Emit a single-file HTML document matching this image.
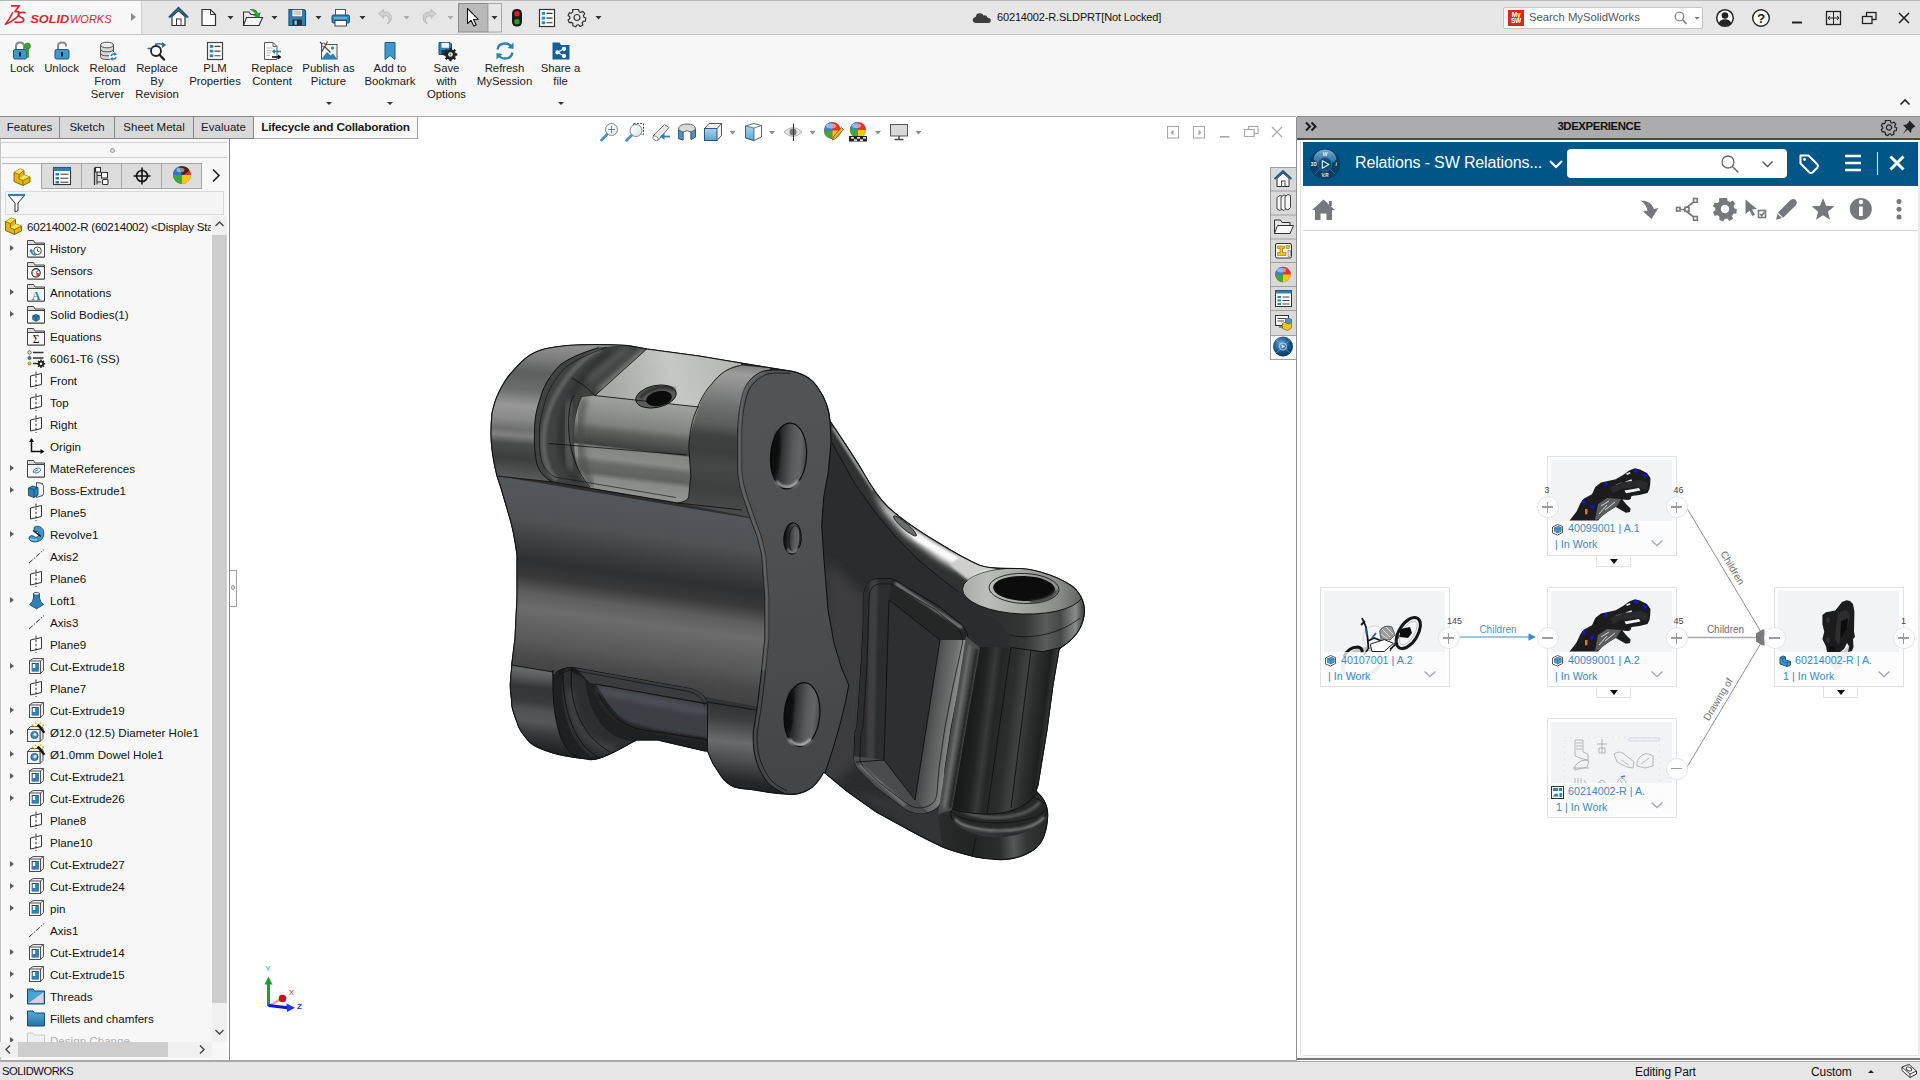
<!DOCTYPE html>
<html><head><meta charset="utf-8"><title>SOLIDWORKS</title>
<style>
*{box-sizing:border-box;margin:0;padding:0}
html,body{width:1920px;height:1080px;overflow:hidden;background:#fff;font-family:"Liberation Sans",sans-serif;font-size:12px;color:#111}
.abs{position:absolute}
#titlebar{position:absolute;left:0;top:0;width:1920px;height:35px;background:#e6e6e6;border-top:1px solid #b9b9b9;border-bottom:1px solid #c6c6c6}
#logo{position:absolute;left:0;top:0;width:142px;height:33px;background:#f7f7f7;border-right:1px solid #d0d0d0}
#ribbon{position:absolute;left:0;top:35px;width:1920px;height:82px;background:#f7f7f7}
.rb{position:absolute;top:27px;text-align:center;font-size:11.35px;line-height:13px;color:#1a1a1a;transform:translateX(-50%);white-space:nowrap}
.ric{position:absolute;top:5px;width:22px;height:22px;transform:translateX(-50%)}
.dd{position:absolute;width:0;height:0;border-left:3px solid transparent;border-right:3px solid transparent;border-top:3px solid #333}
#tabs{z-index:5;position:absolute;left:0;top:116px;height:23px;width:418px}
.tab{position:absolute;top:0;height:23px;background:#d9d9d9;border:1px solid #858585;border-left:none;font-size:11.5px;line-height:21px;text-align:center;color:#1a1a1a}
.tab.act{background:#f9f9f9;font-weight:bold;font-size:11.8px;letter-spacing:-0.2px;border-top-color:#a9a9a9;border-right-color:#a0a0a0;border-bottom-color:#a9a9a9}
#left{position:absolute;left:0;top:139px;width:227px;height:921px;background:#f7f7f7;box-shadow:inset 1px 0 0 #c4c4c4}
#split{position:absolute;left:227px;top:139px;width:3px;height:921px;background:#fdfdfd;border-right:1px solid #8a8a8a}
#view{position:absolute;left:230px;top:117px;width:1066px;height:943px;background:#fff;box-shadow:0 -1px 0 #a9a9a9}
.trow{position:absolute;left:0;height:22px;width:212px;white-space:nowrap;overflow:hidden}
.trow .tx{position:absolute;left:50px;top:4.5px;font-size:11.6px;line-height:14px;color:#111}
.trow .ar{position:absolute;left:10px;top:7.500px;width:0;height:0;border-top:3.700px solid transparent;border-bottom:3.700px solid transparent;border-left:4.500px solid #5a5a5a}
.trow svg{position:absolute;left:26px;top:1px;width:20px;height:20px}
#status{position:absolute;left:0;top:1060px;width:1920px;height:20px;background:#e6e6e6;border-top:2px solid #a9a9a9;font-size:12px}
#status span{position:absolute;top:3px}
#xp{position:absolute;left:1297px;top:117px;width:623px;height:943px;background:#fff}
#xph{position:absolute;left:0;top:-1px;width:623px;height:24px;background:#acacae;border-bottom:2px solid #4a4a4a;border-top:1px solid #8a8a8a}
#xpb{position:absolute;left:6px;top:25px;width:617px;height:44px;background:#005686}
.card{position:absolute;width:130px;height:100px;background:#fff;border:1px solid #e1e3e3}
.card .th{position:absolute;left:3px;top:3px;width:121px;height:92px;background:#f1f3f5}
.card .t1{position:absolute;left:20px;top:64.5px;font-size:10.7px;color:#3a8bc2;white-space:nowrap}
.card .t2{position:absolute;left:7px;top:80.7px;font-size:10.7px;color:#3a8bc2;white-space:nowrap}
.circ{position:absolute;width:22px;height:22px;border-radius:11px;background:#fff;border:1px solid #e4e4e4;margin:-11px 0 0 -11px}
.circ i{position:absolute;left:4.5px;top:9.1px;width:11px;height:1.8px;background:#9b9ba0}
.circ b{position:absolute;left:9.1px;top:4.5px;width:1.8px;height:11px;background:#9b9ba0}
.num{position:absolute;font-size:9px;color:#444;transform:translateX(-50%)}
.ddt{position:absolute;width:35px;height:11px;background:#fff;border:1px solid #e1e3e3;border-top:none}
.ddt::after{content:"";position:absolute;left:13px;top:3px;border-left:4px solid transparent;border-right:4px solid transparent;border-top:5px solid #111}
</style></head><body>
<div id="titlebar">
<div id="logo">
<svg class="abs" style="left:0;top:-1px" width="142" height="34" viewBox="0 0 142 34">
 <g fill="none" stroke="#d7282f" stroke-width="1.700" stroke-linecap="round" stroke-linejoin="round">
  <path d="M11.700 5.800 L19.300 5.800 L15 11.600 L18.800 11.900 Q19.600 14.600 16.600 17.600 Q12 21.600 5.400 24.300 Q9.500 19.500 12.400 13"/>
  <path d="M25 12.700 Q20 11.800 18.600 13.500 Q17.600 15.600 21 17.200 Q24.400 18.700 23.600 20.600 Q22.400 22.800 15.200 22.200"/>
 </g>
 <text x="30.400" y="22.500" font-family="Liberation Sans" font-size="11.800" font-weight="bold" font-style="italic" fill="#d7282f" textLength="38.800" lengthAdjust="spacingAndGlyphs">SOLID</text>
 <text x="70" y="22.500" font-family="Liberation Sans" font-size="11.800" font-style="italic" fill="#d7282f" textLength="41.500" lengthAdjust="spacingAndGlyphs">WORKS</text>
</svg>
<div class="abs" style="left:131px;top:12px;width:0;height:0;border-top:4.500px solid transparent;border-bottom:4.500px solid transparent;border-left:5px solid #8a8a8a"></div>
</div>
<!-- quick access icons -->
<svg class="abs" style="left:160px;top:-1px" width="460" height="34" viewBox="160 0 460 34">
 <!-- home -->
 <path d="M169 17.5 L178.5 8 L188 17.5" fill="none" stroke="#1f5a85" stroke-width="2.2" stroke-linejoin="miter"/>
 <path d="M172 16.5 L172 25.5 L185 25.5 L185 16.5 L178.5 10.5 Z" fill="#fff" stroke="#333" stroke-width="1.2"/>
 <rect x="176.5" y="19" width="4.5" height="6.5" fill="#fff" stroke="#333" stroke-width="1"/>
 <!-- new -->
 <path d="M202 9.5 L210.5 9.5 L215.5 14.5 L215.5 25.5 L202 25.5 Z" fill="#fbfbfb" stroke="#333" stroke-width="1.2"/>
 <path d="M210.5 9.5 L210.5 14.5 L215.5 14.5" fill="none" stroke="#333" stroke-width="1"/>
 <path d="M227.5 16 L233.5 16 L230.5 19.5 Z" fill="#333"/>
 <!-- open -->
 <path d="M243.500 12 L249 12 L251 14.5 L259 14.500 L259 25.5 L243.500 25.5 Z" fill="#e9e9e9" stroke="#333" stroke-width="1.1"/>
 <path d="M246.500 17.5 L262.500 17.5 L259 25.5 L243.500 25.5 Z" fill="#f6f6f6" stroke="#333" stroke-width="1.1"/>
 <path d="M250 9.500 Q256 8.500 258 13.500 L260.500 12.800 L257.500 18 L253 14.800 L255.500 14.200 Q254.500 11.200 250 9.500 Z" fill="#2f9e2f" stroke="#1f7a1f" stroke-width=".5"/>
 <path d="M271.500 16 L277.500 16 L274.500 19.500 Z" fill="#333"/>
 <!-- save -->
 <path d="M289 9.500 L304 9.500 L305.500 11 L305.500 25.500 L289 25.500 Z" fill="#2f80b5" stroke="#1c4f73" stroke-width="1.2"/>
 <rect x="292" y="9.800" width="10.500" height="7" fill="#f2f2f2" stroke="#1c4f73" stroke-width=".6"/>
 <path d="M293.500 12 H301 M293.500 14 H301" stroke="#888" stroke-width=".7"/>
 <rect x="292.500" y="19.500" width="9.500" height="6" fill="#24303a"/>
 <rect x="294.500" y="20.500" width="2.300" height="4.200" fill="#9fc4dc"/>
 <path d="M315.500 16 L321.500 16 L318.500 19.500 Z" fill="#333"/>
 <!-- print -->
 <rect x="335.500" y="9.500" width="10" height="6.500" fill="#fdfdfd" stroke="#555" stroke-width="1"/>
 <rect x="332" y="15" width="17.500" height="8" rx="1.500" fill="#2f86bd" stroke="#1c4f73" stroke-width="1"/>
 <rect x="335" y="20.500" width="11.500" height="5.500" fill="#fdfdfd" stroke="#444" stroke-width="1"/>
 <path d="M334 18 H347" stroke="#9fd0ee" stroke-width="1"/>
 <path d="M359.500 16 L365.500 16 L362.500 19.500 Z" fill="#333"/>
 <!-- undo (disabled) -->
 <path d="M378.500 13.500 L383.500 9.500 L383.500 12 Q391 11.500 391.500 17.500 Q391.700 21.500 387.500 24 Q390 20 388.500 17.500 Q387 15.500 383.500 15.800 L383.500 18.300 Z" fill="#d0d0d0" stroke="#b4b4b4" stroke-width=".8"/>
 <path d="M403.500 16 L409.500 16 L406.500 19.500 Z" fill="#a8a8a8"/>
 <!-- redo (disabled) -->
 <path d="M436 13.500 L431 9.500 L431 12 Q423.500 11.500 423 17.500 Q422.800 21.500 427 24 Q424.500 20 426 17.500 Q427.500 15.500 431 15.800 L431 18.300 Z" fill="#d0d0d0" stroke="#b4b4b4" stroke-width=".8"/>
 <path d="M447.500 16 L453.500 16 L450.500 19.500 Z" fill="#a8a8a8"/>
 <!-- select -->
 <rect x="458.500" y="3.500" width="29.500" height="28.500" fill="#b9b9b9" stroke="#8c8c8c" stroke-width="1"/>
 <rect x="488" y="3.500" width="13.500" height="28.500" fill="#e6e6e6" stroke="#a6a6a6" stroke-width="1"/>
 <path d="M467.500 8.500 L467.500 23.500 L471 20.300 L473.800 26 L476.200 24.900 L473.500 19.500 L478.300 19.300 Z" fill="#fff" stroke="#111" stroke-width="1.1" stroke-linejoin="round"/>
 <path d="M491.500 16 L497.500 16 L494.500 19.500 Z" fill="#333"/>
 <!-- traffic -->
 <rect x="512" y="9" width="10" height="17.500" rx="4.500" fill="#1b1b1b"/>
 <circle cx="517" cy="13.700" r="2.700" fill="#e01b1b"/><circle cx="517" cy="21.700" r="2.700" fill="#1fa526"/>
 <!-- options -->
 <rect x="539.500" y="9.500" width="15" height="17" fill="#fff" stroke="#333" stroke-width="1.2"/>
 <rect x="541.700" y="12" width="3.500" height="2.800" fill="#2f86bd"/><rect x="541.700" y="16.700" width="3.500" height="2.800" fill="#2f86bd"/><rect x="541.700" y="21.400" width="3.500" height="2.800" fill="#2f86bd"/>
 <path d="M546.500 13.400 H552.500 M546.500 18.100 H552.500 M546.500 22.800 H552.500" stroke="#333" stroke-width="1.1"/>
 <!-- gear -->
 <g transform="translate(577,17.500)" fill="none" stroke="#333" stroke-width="1.200">
  <circle r="3"/>
  <path d="M-1.600 -8 L1.600 -8 L2.100 -5.800 L3.800 -5 L5.800 -6.200 L7.800 -3.800 L6.400 -2 L6.900 -0.300 L8.800 0.500 L8.400 3.600 L6.200 3.900 L5.200 5.400 L5.900 7.500 L3.200 9 L1.700 7.300 L-0.100 7.500 L-1.300 9.300 L-4.200 8.200 L-4.100 6 L-5.500 4.800 L-7.700 5.200 L-8.900 2.400 L-7.100 1.100 L-7.200 -0.700 L-8.900 -2 L-7.700 -4.700 L-5.500 -4.400 L-4.200 -5.700 L-4.400 -7.800 Z" stroke-linejoin="round"/>
 </g>
 <path d="M595.500 16 L601.500 16 L598.500 19.500 Z" fill="#333"/>
</svg>
<!-- title -->
<svg class="abs" style="left:972px;top:10px" width="20" height="14" viewBox="0 0 20 14"><path d="M4.500 12 Q0.500 12 0.800 8.700 Q1 6.300 3.700 6 Q4 2.600 7.500 2.300 Q10.300 2 11.600 4.500 Q14.600 3.800 15.600 6.700 Q18.800 6.700 18.800 9.500 Q18.800 12 16 12 Z" fill="#3c3c3c"/></svg>
<div class="abs" style="left:997px;top:10px;font-size:11px;letter-spacing:-0.150px;white-space:nowrap;color:#111">60214002-R.SLDPRT[Not Locked]</div>
<!-- search -->
<div class="abs" style="left:1503px;top:6px;width:200px;height:22px;background:#fff;border:1px solid #c3c3c3;border-radius:2px"></div>
<div class="abs" style="left:1508px;top:9px;width:16px;height:16px;background:#da2817;color:#fff;font-size:6.500px;font-weight:bold;line-height:6.500px;text-align:center;padding-top:1.500px;letter-spacing:-0.200px">My<br>SW</div>
<div class="abs" style="left:1529px;top:10px;font-size:11.400px;color:#555;white-space:nowrap;letter-spacing:-0.050px">Search MySolidWorks</div>
<svg class="abs" style="left:1670px;top:8px" width="34" height="18" viewBox="0 0 34 18"><circle cx="9.500" cy="7.500" r="4.300" fill="none" stroke="#8a8a8a" stroke-width="1.300"/><path d="M12.700 10.800 L16.500 14.800" stroke="#8a8a8a" stroke-width="1.800"/><path d="M24.500 8 L29.500 8 L27 10.800 Z" fill="#777"/></svg>
<svg class="abs" style="left:1712px;top:4px" width="208" height="28" viewBox="1712 5 208 28">
 <circle cx="1725" cy="18" r="8.300" fill="#fff" stroke="#222" stroke-width="1.500"/><circle cx="1725" cy="15.500" r="3.300" fill="#222"/><path d="M1718.800 23.300 Q1720 19.200 1725 19.200 Q1730 19.200 1731.200 23.300 Q1728 26 1725 26 Q1722 26 1718.800 23.300 Z" fill="#222"/>
 <circle cx="1761" cy="18" r="8.300" fill="#fff" stroke="#222" stroke-width="1.400"/>
 <text x="1761" y="22.800" font-family="Liberation Sans" font-size="13.500" font-weight="bold" text-anchor="middle" fill="#222">?</text>
 <rect x="1792" y="21.500" width="10" height="2" fill="#222"/>
 <rect x="1826.500" y="11.500" width="14" height="13" fill="none" stroke="#222" stroke-width="1.300"/><path d="M1833.500 11.500 V24.500" stroke="#222" stroke-width="1"/><path d="M1828 18 H1839 M1830 16 L1828 18 L1830 20 M1837 16 L1839 18 L1837 20" stroke="#222" stroke-width="1" fill="none"/>
 <rect x="1866.500" y="12.500" width="9.500" height="7" fill="none" stroke="#222" stroke-width="1.300"/><rect x="1862.500" y="16.500" width="9.500" height="7" fill="#e6e6e6" stroke="#222" stroke-width="1.300"/>
 <path d="M1899 13 L1909 23 M1909 13 L1899 23" stroke="#222" stroke-width="1.600"/>
</svg>
</div>
<div id="ribbon">
<!-- Lock -->
<svg class="ric" style="left:22px" viewBox="0 0 22 22"><path d="M5 10 V6.500 Q5 2.500 9 2.500 Q13 2.500 13 6.500 V10" fill="none" stroke="#8a8a8a" stroke-width="2"/><rect x="2.500" y="9.500" width="13" height="9.500" rx="1.500" fill="#3f97cc" stroke="#1c5c86" stroke-width="1"/><rect x="8" y="12" width="2" height="4.500" fill="#123"/><circle cx="16.500" cy="6" r="3" fill="#36a336" stroke="#1f7a1f" stroke-width=".6"/><rect x="15.500" y="8.500" width="2.200" height="9" fill="#36a336" stroke="#1f7a1f" stroke-width=".5"/></svg>
<div class="rb" style="left:22px">Lock</div>
<!-- Unlock -->
<svg class="ric" style="left:61.500px" viewBox="0 0 22 22"><path d="M7 10 V6 Q7 2.500 11 2.500 Q15 2.500 15 5.500 V6.500" fill="none" stroke="#8a8a8a" stroke-width="2"/><rect x="4" y="9.500" width="14" height="9.500" rx="1.500" fill="#3f97cc" stroke="#1c5c86" stroke-width="1"/><rect x="10" y="12" width="2" height="4.500" fill="#123"/></svg>
<div class="rb" style="left:61.500px">Unlock</div>
<!-- Reload -->
<svg class="ric" style="left:107.500px" viewBox="0 0 22 22"><path d="M3.500 5 V16.500 Q3.500 19.500 10 19.500 Q16.500 19.500 16.500 16.500 V5" fill="#d8d8d8" stroke="#555" stroke-width="1"/><ellipse cx="10" cy="5" rx="6.500" ry="2.800" fill="#ededed" stroke="#555" stroke-width="1"/><path d="M3.500 9 Q3.500 11.800 10 11.800 Q16.500 11.800 16.500 9 M3.500 13 Q3.500 15.800 10 15.800 Q16.500 15.800 16.500 13" fill="none" stroke="#555" stroke-width="1"/><circle cx="16.500" cy="16.500" r="4.500" fill="#f7f7f7"/><path d="M13.200 15.800 Q14.200 12.800 17.300 13.300 L17.600 12 L20 14.500 L17 15.800 L17.200 14.700 Q15.300 14.500 14.600 16.200 Z M19.800 17.200 Q18.800 20.200 15.700 19.700 L15.400 21 L13 18.500 L16 17.200 L15.800 18.300 Q17.700 18.500 18.400 16.800 Z" fill="#2f80b5"/></svg>
<div class="rb" style="left:107.500px">Reload<br>From<br>Server</div>
<!-- Replace by revision -->
<svg class="ric" style="left:157px" viewBox="0 0 22 22"><path d="M1.500 8.500 L5 8.500 M9 4.500 Q13 3 17.500 5" fill="none" stroke="#2f6f9c" stroke-width="1.500"/><path d="M16 2 L20.300 5 L16 8 Z" fill="#2f6f9c"/><circle cx="10" cy="11" r="5" fill="#fff" stroke="#222" stroke-width="1.800"/><path d="M13.500 14.700 L18 19.500" stroke="#222" stroke-width="2.400" stroke-linecap="round"/></svg>
<div class="rb" style="left:157px">Replace<br>By<br>Revision</div>
<!-- PLM properties -->
<svg class="ric" style="left:215px" viewBox="0 0 22 22"><rect x="3.500" y="2.500" width="15" height="17" fill="#fff" stroke="#444" stroke-width="1.200"/><rect x="5.700" y="5" width="3.600" height="2.800" fill="#2f80b5"/><rect x="5.700" y="9.700" width="3.600" height="2.800" fill="#2f80b5"/><rect x="5.700" y="14.400" width="3.600" height="2.800" fill="#2f80b5"/><path d="M10.500 6.400 H16.500 M10.500 11.100 H16.500 M10.500 15.800 H16.500" stroke="#444" stroke-width="1.100"/></svg>
<div class="rb" style="left:215px">PLM<br>Properties</div>
<!-- Replace content -->
<svg class="ric" style="left:272px" viewBox="0 0 22 22"><path d="M3.500 2.500 H12 L16 6.500 V19.500 H3.500 Z" fill="#fff" stroke="#555" stroke-width="1"/><path d="M12 2.500 V6.500 H16" fill="none" stroke="#555" stroke-width=".9"/><path d="M5.500 8 H11 M5.500 10.500 H10 M5.500 13 H10 M5.500 15.500 H9" stroke="#b5b5b5" stroke-width="1.100"/><path d="M20 11.500 H13" stroke="#2f80b5" stroke-width="1.600"/><path d="M14 9 L10.800 11.500 L14 14 Z" fill="#2f80b5"/><path d="M11 17 H18" stroke="#111" stroke-width="1.600"/><path d="M17 14.500 L20.500 17 L17 19.500 Z" fill="#111"/></svg>
<div class="rb" style="left:272px">Replace<br>Content</div>
<!-- Publish -->
<svg class="ric" style="left:328.500px" viewBox="0 0 22 22"><rect x="3.500" y="4.500" width="15.500" height="14.500" fill="#eef3f6" stroke="#555" stroke-width="1"/><path d="M3.500 19 L9 12 L12.500 15.500 L15 13.500 L19 19 Z" fill="#2f80b5"/><circle cx="14.500" cy="8" r="1.600" fill="#2f80b5"/><path d="M2 2 L12.500 12.500 M9.500 1.500 L3.500 12" stroke="#444" stroke-width="1.200"/><circle cx="5.500" cy="5" r="1.800" fill="#fff" stroke="#444" stroke-width=".9"/></svg>
<div class="rb" style="left:328.500px">Publish as<br>Picture</div><div class="dd" style="left:325.500px;top:67px"></div>
<!-- Bookmark -->
<svg class="ric" style="left:390px" viewBox="0 0 22 22"><path d="M6 2.500 H16 V19.500 L11 15.500 L6 19.500 Z" fill="#3f97cc" stroke="#1c5c86" stroke-width="1"/></svg>
<div class="rb" style="left:390px">Add to<br>Bookmark</div><div class="dd" style="left:387px;top:67px"></div>
<!-- Save with options -->
<svg class="ric" style="left:446.500px" viewBox="0 0 22 22"><path d="M3 2.500 H14 L15.500 4 V14.500 H3 Z" fill="#2f80b5" stroke="#1c4f73" stroke-width="1"/><rect x="5.500" y="2.800" width="7.500" height="5" fill="#f2f2f2"/><rect x="5.500" y="10" width="6" height="4.500" fill="#24303a"/><g transform="translate(14.500,14.500)"><circle r="5.300" fill="#222"/><circle r="2" fill="#f7f7f7"/><g stroke="#222" stroke-width="2.300"><path d="M0 -6.800 V6.800 M-6.800 0 H6.800 M-4.800 -4.800 L4.800 4.800 M-4.800 4.800 L4.800 -4.800"/></g><circle r="2.300" fill="#f7f7f7"/><circle r="1" fill="#2f80b5"/></g></svg>
<div class="rb" style="left:446.500px">Save<br>with<br>Options</div>
<!-- Refresh -->
<svg class="ric" style="left:504.500px" viewBox="0 0 22 22"><path d="M3.500 9.500 Q4.500 3.500 11 3.500 Q15.500 3.500 17.500 7" fill="none" stroke="#2f80b5" stroke-width="2.300"/><path d="M19.500 2.500 L19.500 9 L13.500 8 Z" fill="#2f80b5"/><path d="M18.500 12.500 Q17.500 18.500 11 18.500 Q6.500 18.500 4.500 15" fill="none" stroke="#2f80b5" stroke-width="2.300"/><path d="M2.500 19.500 L2.500 13 L8.500 14 Z" fill="#2f80b5"/></svg>
<div class="rb" style="left:504.500px">Refresh<br>MySession</div>
<!-- Share -->
<svg class="ric" style="left:560.500px" viewBox="0 0 22 22"><path d="M2.500 2.500 H9.500 L11 5 H19.500 V19.500 H2.500 Z" fill="#14619a"/><g stroke="#fff" stroke-width="1.100" fill="#fff"><path d="M7.500 12.300 L14 8.800 M7.500 12.300 L14 16"/><circle cx="7.500" cy="12.300" r="1.600"/><circle cx="14" cy="8.800" r="1.600"/><circle cx="14" cy="16" r="1.600"/></g></svg>
<div class="rb" style="left:560.500px">Share a<br>file</div><div class="dd" style="left:557.500px;top:67px"></div>
<svg class="abs" style="left:1899px;top:63px" width="12" height="8" viewBox="0 0 12 8"><path d="M1.500 6.500 L6 2 L10.500 6.500" fill="none" stroke="#222" stroke-width="1.600"/></svg>
</div>
<div id="tabs">
<div class="tab" style="left:0;width:60px">Features</div>
<div class="tab" style="left:60px;width:55px">Sketch</div>
<div class="tab" style="left:115px;width:79px">Sheet Metal</div>
<div class="tab" style="left:194px;width:60px">Evaluate</div>
<div class="tab act" style="left:254px;width:164px">Lifecycle and Collaboration</div>
</div>
<div id="left">
<div class="abs" style="left:0;top:3px;width:227px;height:1px;background:#cfcfcf"></div>
<div class="abs" style="left:110px;top:9px;width:5px;height:5px;border-radius:3px;border:1px solid #9a9a9a;background:#dcdcdc"></div>
<div class="abs" style="left:0;top:18px;width:227px;height:1px;background:#cfcfcf"></div>
<div class="abs" style="left:2px;top:23px;width:200px;height:27px;border-bottom:1px solid #a6a6a6"></div>
<div class="abs" style="left:2px;top:24px;width:40px;height:26px;background:#f7f7f7;border-top:1px solid #b9b9b9"></div>
<div class="abs" style="left:41px;top:24px;width:41px;height:26px;background:#dcdcdc;border:1px solid #a6a6a6"></div>
<div class="abs" style="left:81px;top:24px;width:41px;height:26px;background:#dcdcdc;border:1px solid #a6a6a6"></div>
<div class="abs" style="left:121px;top:24px;width:41px;height:26px;background:#dcdcdc;border:1px solid #a6a6a6"></div>
<div class="abs" style="left:161px;top:24px;width:41px;height:26px;background:#dcdcdc;border:1px solid #a6a6a6"></div>
<svg class="abs" style="left:0;top:22px" width="228" height="30" viewBox="0 0 228 30">
<g transform="translate(12,5)"><path d="M2 6.500 L8 3 L12 4.500 V9 L18 11 V16 L11 19.500 L2 15.500 Z" fill="#e2b40c" stroke="#8a6a00" stroke-width="1"/><path d="M2 6.500 L8 3 L12 4.500 L7 8.500 Z M7 13 L12 9 L18 11 L11 14.500 Z" fill="#fae25a"/><path d="M2 6.500 L7 8.500 L12 4.500 M7 8.500 V13 L11 14.500 L18 11 M11 14.500 V19.500" fill="none" stroke="#8a6a00" stroke-width=".9"/></g>
<g transform="translate(52,5)"><rect x="1.500" y="1.500" width="17" height="17" fill="#fff" stroke="#333" stroke-width="1.100"/><rect x="1.500" y="1.500" width="17" height="3.500" fill="#2f80b5"/><rect x="3.500" y="7" width="3.500" height="2.500" fill="#2f80b5"/><rect x="3.500" y="11" width="3.500" height="2.500" fill="#2f80b5"/><rect x="3.500" y="15" width="3.500" height="2.500" fill="#2f80b5"/><path d="M8.500 8.200 H16.500 M8.500 12.200 H16.500 M8.500 16.200 H16.500" stroke="#333" stroke-width="1"/></g>
<g transform="translate(92,5)" fill="#fff" stroke="#333" stroke-width="1.100"><rect x="3.500" y="1.500" width="5" height="4.500"/><path d="M5 6 V18.500 M5 9.500 H9 M5 16 H9" fill="none"/><rect x="9.500" y="6.500" width="6" height="5.500"/><rect x="10.500" y="13.500" width="5.500" height="5" rx="1"/><path d="M2.500 1.500 V19" stroke-width="1.300"/></g>
<g transform="translate(132,5)" fill="none" stroke="#111" stroke-width="1.600"><circle cx="10" cy="10" r="5.500"/><path d="M10 1.500 V18.500 M1.500 10 H18.500"/></g>
<g transform="translate(172,4)"><circle cx="10" cy="10" r="9" fill="#e8332a"/><path d="M10 10 L1 10 A9 9 0 0 0 10 19 Z" fill="#39a845"/><path d="M10 10 L10 19 A9 9 0 0 0 19 10 Z" fill="#f4c619"/><path d="M10 10 L1 10 A9 9 0 0 1 7 1.500 Z" fill="#2f77c8"/><path d="M7 1.500 Q14 0 17.500 5 Q14 9.500 10 10 Z" fill="#222" opacity=".85"/><ellipse cx="8.500" cy="5" rx="4" ry="2.300" fill="#fff" opacity=".45"/></g>
<path d="M213 8.500 L219 14.500 L213 20.500" fill="none" stroke="#222" stroke-width="1.700"/>
</svg>
<div class="abs" style="left:5px;top:52px;width:219px;height:24px;background:#f4f4f4;border:1px solid #d9d9d9"></div>
<svg class="abs" style="left:7px;top:53px" width="20" height="22" viewBox="0 0 20 22"><path d="M1.500 3.500 H17.500 L11 11 V18.500 L8 20 V11 Z" fill="#fff" stroke="#333" stroke-width="1"/><path d="M1 3 H18" stroke="#2f80b5" stroke-width="2.200"/></svg>
<svg class="abs" style="left:3px;top:75px" width="22" height="22" viewBox="0 0 22 22"><path d="M2.500 7.500 L8.500 4 L12.500 5.500 V10 L18.500 12 V17 L11.500 20.500 L2.500 16.500 Z" fill="#e2b40c" stroke="#8a6a00" stroke-width="1"/><path d="M2.500 7.500 L8.500 4 L12.500 5.500 L7.500 9.500 Z M7.500 14 L12.500 10 L18.500 12 L11.500 15.500 Z" fill="#fae25a"/><path d="M2.500 7.500 L7.500 9.500 L12.500 5.500 M7.500 9.500 V14 L11.500 15.500 L18.500 12 M11.500 15.500 V20.500" fill="none" stroke="#8a6a00" stroke-width=".9"/></svg>
<div class="abs" style="left:27px;top:81px;width:184px;overflow:hidden;white-space:nowrap;font-size:11.600px;letter-spacing:-0.250px;color:#111">60214002-R (60214002) &lt;Display Sta</div>
<div class="trow" style="top:98px;height:22px"><span class="ar"></span><svg viewBox="0 0 20 20"><path d="M1.500 2.500 H7.500 L9 5 H18.500 V19 H1.500 Z" fill="#dcdcdc" stroke="#444" stroke-width="1"/><path d="M1.500 6.500 H18.500 V19 H1.500 Z" fill="#f7f7f7" stroke="#444" stroke-width="1"/><circle cx="11.500" cy="12.800" r="3.800" fill="#fff" stroke="#333" stroke-width=".9"/><path d="M11.500 10.600 V13 L13.500 14" stroke="#333" stroke-width=".8" fill="none"/><path d="M5 12 Q5.500 16.800 10 17" stroke="#2f80b5" stroke-width="1.600" fill="none"/><path d="M3.200 13.800 L5 10.600 L7.300 13.600 Z" fill="#2f80b5"/></svg><span class="tx" style="">History</span></div>
<div class="trow" style="top:120px;height:22px"><svg viewBox="0 0 20 20"><path d="M1.500 2.500 H7.500 L9 5 H18.500 V19 H1.500 Z" fill="#dcdcdc" stroke="#444" stroke-width="1"/><path d="M1.500 6.500 H18.500 V19 H1.500 Z" fill="#f7f7f7" stroke="#444" stroke-width="1"/><circle cx="10" cy="12.800" r="4.200" fill="#fff" stroke="#222" stroke-width="1.100"/><path d="M10 12.800 L12.800 10" stroke="#2f80b5" stroke-width="1.100"/><path d="M10 12.800 L14 13.600 A4.200 4.200 0 0 1 10.800 16.900 Z" fill="#e2401c"/><path d="M10 9.200 V10 M6.400 12.800 H7.200 M7.400 10.200 L8 10.800" stroke="#222" stroke-width=".7"/></svg><span class="tx" style="">Sensors</span></div>
<div class="trow" style="top:142px;height:22px"><span class="ar"></span><svg viewBox="0 0 20 20"><path d="M1.500 2.500 H7.500 L9 5 H18.500 V19 H1.500 Z" fill="#dcdcdc" stroke="#444" stroke-width="1"/><path d="M1.500 6.500 H18.500 V19 H1.500 Z" fill="#f7f7f7" stroke="#444" stroke-width="1"/><text x="10" y="17.600" font-family="Liberation Serif" font-size="12" font-weight="bold" text-anchor="middle" fill="#2f80b5">A</text></svg><span class="tx" style="">Annotations</span></div>
<div class="trow" style="top:164px;height:22px"><span class="ar"></span><svg viewBox="0 0 20 20"><path d="M1.500 2.500 H7.500 L9 5 H18.500 V19 H1.500 Z" fill="#dcdcdc" stroke="#444" stroke-width="1"/><path d="M1.500 6.500 H18.500 V19 H1.500 Z" fill="#f7f7f7" stroke="#444" stroke-width="1"/><g transform="translate(0,.8)"><path d="M10 9.500 L13.300 11 V14.800 L10 16.500 L6.700 14.800 V11 Z" fill="#2f80b5" stroke="#174a6e" stroke-width=".7"/><path d="M6.700 11 L10 12.500 L13.300 11 M10 12.500 V16.500" stroke="#174a6e" stroke-width=".7" fill="none"/></g></svg><span class="tx" style="">Solid Bodies(1)</span></div>
<div class="trow" style="top:186px;height:22px"><svg viewBox="0 0 20 20"><path d="M1.500 2.500 H7.500 L9 5 H18.500 V19 H1.500 Z" fill="#dcdcdc" stroke="#444" stroke-width="1"/><path d="M1.500 6.500 H18.500 V19 H1.500 Z" fill="#f7f7f7" stroke="#444" stroke-width="1"/><text x="10" y="17.300" font-family="Liberation Serif" font-size="11.500" text-anchor="middle" fill="#111">Σ</text></svg><span class="tx" style="">Equations</span></div>
<div class="trow" style="top:208px;height:22px"><svg viewBox="0 0 20 20"><circle cx="3.500" cy="4.500" r="1.600" fill="#fff" stroke="#444" stroke-width=".9"/><circle cx="3.500" cy="10" r="1.600" fill="#2f80b5" stroke="#1c4f73" stroke-width=".7"/><circle cx="3.500" cy="15.500" r="1.600" fill="#f0b400" stroke="#a67a00" stroke-width=".7"/><path d="M7 4.500 H17.500 M7 10 H17.500 M7 15.500 H11.500" stroke="#333" stroke-width="1.300"/><g transform="translate(15,15.800)"><circle r="3" fill="#222"/><g stroke="#222" stroke-width="1.500"><path d="M0 -4.200 V4.200 M-4.200 0 H4.200 M-3 -3 L3 3 M-3 3 L3 -3"/></g><circle r="1.200" fill="#f7f7f7"/></g></svg><span class="tx" style="">6061-T6 (SS)</span></div>
<div class="trow" style="top:230px;height:22px"><svg viewBox="0 0 20 20"><path d="M4.500 6 L15.500 3.500 V14.500 L4.500 17 Z" fill="#fdfdfd" stroke="#333" stroke-width="1"/><path d="M10 1.500 V19" stroke="#333" stroke-width="1" stroke-dasharray="2.500 1.600"/></svg><span class="tx" style="">Front</span></div>
<div class="trow" style="top:252px;height:22px"><svg viewBox="0 0 20 20"><path d="M4.500 6 L15.500 3.500 V14.500 L4.500 17 Z" fill="#fdfdfd" stroke="#333" stroke-width="1"/><path d="M10 1.500 V19" stroke="#333" stroke-width="1" stroke-dasharray="2.500 1.600"/></svg><span class="tx" style="">Top</span></div>
<div class="trow" style="top:274px;height:22px"><svg viewBox="0 0 20 20"><path d="M4.500 6 L15.500 3.500 V14.500 L4.500 17 Z" fill="#fdfdfd" stroke="#333" stroke-width="1"/><path d="M10 1.500 V19" stroke="#333" stroke-width="1" stroke-dasharray="2.500 1.600"/></svg><span class="tx" style="">Right</span></div>
<div class="trow" style="top:296px;height:22px"><svg viewBox="0 0 20 20"><path d="M5.500 3 V15.500 H17" fill="none" stroke="#111" stroke-width="1.500"/><path d="M3 6 L5.500 2 L8 6 Z M14.500 13 L18.500 15.500 L14.500 18 Z" fill="#111"/></svg><span class="tx" style="">Origin</span></div>
<div class="trow" style="top:318px;height:22px"><span class="ar"></span><svg viewBox="0 0 20 20"><path d="M1.500 2.500 H7.500 L9 5 H18.500 V19 H1.500 Z" fill="#dcdcdc" stroke="#444" stroke-width="1"/><path d="M1.500 6.500 H18.500 V19 H1.500 Z" fill="#f7f7f7" stroke="#444" stroke-width="1"/><path transform="translate(0,.8)" d="M7.500 14 Q6.500 11.500 9 10.300 L12 9.200 Q14.200 8.800 14.600 10.800 Q14.800 12.500 13 13.200 L10 14.300 Q8.800 14.500 8.600 13.400 Q8.600 12.500 9.600 12.100 L12.200 11.200" fill="none" stroke="#2f80b5" stroke-width="1"/></svg><span class="tx" style="">MateReferences</span></div>
<div class="trow" style="top:340px;height:22px"><span class="ar"></span><svg viewBox="0 0 20 20"><path d="M10.500 2.500 L16.500 3.500 V15.500 L10.500 17.500 Z" fill="#eaeaea" stroke="#444" stroke-width=".9"/><path d="M13 2.800 Q17.500 3.500 17.500 6 V14.500 L15 16" fill="#f5f5f5" stroke="#444" stroke-width=".8"/><path d="M2.500 8 L6.500 6 L12 7.500 V15 L8 17.500 L2.500 15.500 Z" fill="#2f80b5" stroke="#174a6e" stroke-width=".9"/><path d="M2.500 8 L8 9.800 L12 7.500 M8 9.800 V17.500" stroke="#174a6e" stroke-width=".8" fill="none"/></svg><span class="tx" style="">Boss-Extrude1</span></div>
<div class="trow" style="top:362px;height:22px"><svg viewBox="0 0 20 20"><path d="M4.500 6 L15.500 3.500 V14.500 L4.500 17 Z" fill="#fdfdfd" stroke="#333" stroke-width="1"/><path d="M10 1.500 V19" stroke="#333" stroke-width="1" stroke-dasharray="2.500 1.600"/></svg><span class="tx" style="">Plane5</span></div>
<div class="trow" style="top:384px;height:22px"><span class="ar"></span><svg viewBox="0 0 20 20"><path d="M8 3.500 Q10 1.500 13.500 2.500 Q18 4.500 17.800 10 Q17.500 16.500 10.500 17.800 Q4.500 18.500 3 14.500 Q3 12 5.500 11.500 L8.500 12.500 Q9.500 14 11.500 13 Q13.500 11.500 12.800 9 Q12 7 9.500 7.500 Q7.500 6 8 3.500 Z" fill="#3f97cc" stroke="#174a6e" stroke-width=".9"/><path d="M4 14.800 Q7 16.800 11 15.500" stroke="#9fd0ee" stroke-width="1.200" fill="none"/><path d="M7 6.500 L15 12.500" stroke="#111" stroke-width="1.300"/></svg><span class="tx" style="">Revolve1</span></div>
<div class="trow" style="top:406px;height:22px"><svg viewBox="0 0 20 20"><path d="M3 17 L18 3.500" stroke="#333" stroke-width="1" stroke-dasharray="5 1.500 1.500 1.500"/></svg><span class="tx" style="">Axis2</span></div>
<div class="trow" style="top:428px;height:22px"><svg viewBox="0 0 20 20"><path d="M4.500 6 L15.500 3.500 V14.500 L4.500 17 Z" fill="#fdfdfd" stroke="#333" stroke-width="1"/><path d="M10 1.500 V19" stroke="#333" stroke-width="1" stroke-dasharray="2.500 1.600"/></svg><span class="tx" style="">Plane6</span></div>
<div class="trow" style="top:450px;height:22px"><span class="ar"></span><svg viewBox="0 0 20 20"><path d="M7.500 3.500 Q10.500 2 13.500 3.500 V8 Q14 12 17.500 14.500 L10.500 18.800 L3.500 14.500 Q7 12 7.500 8 Z" fill="#2f80b5" stroke="#174a6e" stroke-width=".9"/><ellipse cx="10.500" cy="3.800" rx="3" ry="1.400" fill="#e4eef5" stroke="#174a6e" stroke-width=".7"/></svg><span class="tx" style="">Loft1</span></div>
<div class="trow" style="top:472px;height:22px"><svg viewBox="0 0 20 20"><path d="M3 17 L18 3.500" stroke="#333" stroke-width="1" stroke-dasharray="5 1.500 1.500 1.500"/></svg><span class="tx" style="">Axis3</span></div>
<div class="trow" style="top:494px;height:22px"><svg viewBox="0 0 20 20"><path d="M4.500 6 L15.500 3.500 V14.500 L4.500 17 Z" fill="#fdfdfd" stroke="#333" stroke-width="1"/><path d="M10 1.500 V19" stroke="#333" stroke-width="1" stroke-dasharray="2.500 1.600"/></svg><span class="tx" style="">Plane9</span></div>
<div class="trow" style="top:516px;height:22px"><span class="ar"></span><svg viewBox="0 0 20 20"><path d="M3.500 5 L7 2.500 H17.500 V14.500 L14.500 17.500 H3.500 Z" fill="#eeeeee" stroke="#444" stroke-width=".9"/><rect x="3.500" y="5" width="11" height="12.500" fill="#f6f6f6" stroke="#444" stroke-width=".9"/><path d="M14.500 5 L17.500 2.500" stroke="#444" stroke-width=".8"/><rect x="6.200" y="7.500" width="6" height="7.500" fill="#fff" stroke="#174a6e" stroke-width="1"/><path d="M9.200 7.500 H12.200 V15 H6.200 V12 H9.200 Z" fill="#2f80b5"/></svg><span class="tx" style="">Cut-Extrude18</span></div>
<div class="trow" style="top:538px;height:22px"><svg viewBox="0 0 20 20"><path d="M4.500 6 L15.500 3.500 V14.500 L4.500 17 Z" fill="#fdfdfd" stroke="#333" stroke-width="1"/><path d="M10 1.500 V19" stroke="#333" stroke-width="1" stroke-dasharray="2.500 1.600"/></svg><span class="tx" style="">Plane7</span></div>
<div class="trow" style="top:560px;height:22px"><span class="ar"></span><svg viewBox="0 0 20 20"><path d="M3.500 5 L7 2.500 H17.500 V14.500 L14.500 17.500 H3.500 Z" fill="#eeeeee" stroke="#444" stroke-width=".9"/><rect x="3.500" y="5" width="11" height="12.500" fill="#f6f6f6" stroke="#444" stroke-width=".9"/><path d="M14.500 5 L17.500 2.500" stroke="#444" stroke-width=".8"/><rect x="6.200" y="7.500" width="6" height="7.500" fill="#fff" stroke="#174a6e" stroke-width="1"/><path d="M9.200 7.500 H12.200 V15 H6.200 V12 H9.200 Z" fill="#2f80b5"/></svg><span class="tx" style="">Cut-Extrude19</span></div>
<div class="trow" style="top:582px;height:22px"><span class="ar"></span><svg viewBox="0 0 20 20"><path d="M1.500 7.500 L4.500 4.500 H15 L17 6.500 V16.500 L14 19.500 H1.500 Z" fill="#e9e9e9" stroke="#444" stroke-width=".9"/><path d="M1.500 7.500 H14 V19.500 M14 7.500 L17 4.800" fill="none" stroke="#444" stroke-width=".9"/><rect x="1.500" y="7.500" width="12.500" height="12" fill="#f4f4f4" stroke="#444" stroke-width=".9"/><circle cx="8.500" cy="13" r="3.600" fill="#3f8fc4" stroke="#174a6e" stroke-width=".8"/><circle cx="9" cy="12.500" r="1.700" fill="#cfe2ef"/><path d="M11.800 2.600 L18.400 10.800" stroke="#161616" stroke-width="2.400"/><g fill="#f0b400"><circle cx="6.500" cy="3.200" r=".9"/><circle cx="9.500" cy="1.300" r=".9"/><circle cx="14.500" cy="1.200" r=".9"/><circle cx="17.300" cy="3.200" r=".9"/><circle cx="8.800" cy="4.800" r=".8"/></g></svg><span class="tx" style="">Ø12.0 (12.5) Diameter Hole1</span></div>
<div class="trow" style="top:604px;height:22px"><span class="ar"></span><svg viewBox="0 0 20 20"><path d="M1.500 7.500 L4.500 4.500 H15 L17 6.500 V16.500 L14 19.500 H1.500 Z" fill="#e9e9e9" stroke="#444" stroke-width=".9"/><path d="M1.500 7.500 H14 V19.500 M14 7.500 L17 4.800" fill="none" stroke="#444" stroke-width=".9"/><rect x="1.500" y="7.500" width="12.500" height="12" fill="#f4f4f4" stroke="#444" stroke-width=".9"/><circle cx="8.500" cy="13" r="3.600" fill="#3f8fc4" stroke="#174a6e" stroke-width=".8"/><circle cx="9" cy="12.500" r="1.700" fill="#cfe2ef"/><path d="M11.800 2.600 L18.400 10.800" stroke="#161616" stroke-width="2.400"/><g fill="#f0b400"><circle cx="6.500" cy="3.200" r=".9"/><circle cx="9.500" cy="1.300" r=".9"/><circle cx="14.500" cy="1.200" r=".9"/><circle cx="17.300" cy="3.200" r=".9"/><circle cx="8.800" cy="4.800" r=".8"/></g></svg><span class="tx" style="">Ø1.0mm Dowel Hole1</span></div>
<div class="trow" style="top:626px;height:22px"><span class="ar"></span><svg viewBox="0 0 20 20"><path d="M3.500 5 L7 2.500 H17.500 V14.500 L14.500 17.500 H3.500 Z" fill="#eeeeee" stroke="#444" stroke-width=".9"/><rect x="3.500" y="5" width="11" height="12.500" fill="#f6f6f6" stroke="#444" stroke-width=".9"/><path d="M14.500 5 L17.500 2.500" stroke="#444" stroke-width=".8"/><rect x="6.200" y="7.500" width="6" height="7.500" fill="#fff" stroke="#174a6e" stroke-width="1"/><path d="M9.200 7.500 H12.200 V15 H6.200 V12 H9.200 Z" fill="#2f80b5"/></svg><span class="tx" style="">Cut-Extrude21</span></div>
<div class="trow" style="top:648px;height:22px"><span class="ar"></span><svg viewBox="0 0 20 20"><path d="M3.500 5 L7 2.500 H17.500 V14.500 L14.500 17.500 H3.500 Z" fill="#eeeeee" stroke="#444" stroke-width=".9"/><rect x="3.500" y="5" width="11" height="12.500" fill="#f6f6f6" stroke="#444" stroke-width=".9"/><path d="M14.500 5 L17.500 2.500" stroke="#444" stroke-width=".8"/><rect x="6.200" y="7.500" width="6" height="7.500" fill="#fff" stroke="#174a6e" stroke-width="1"/><path d="M9.200 7.500 H12.200 V15 H6.200 V12 H9.200 Z" fill="#2f80b5"/></svg><span class="tx" style="">Cut-Extrude26</span></div>
<div class="trow" style="top:670px;height:22px"><svg viewBox="0 0 20 20"><path d="M4.500 6 L15.500 3.500 V14.500 L4.500 17 Z" fill="#fdfdfd" stroke="#333" stroke-width="1"/><path d="M10 1.500 V19" stroke="#333" stroke-width="1" stroke-dasharray="2.500 1.600"/></svg><span class="tx" style="">Plane8</span></div>
<div class="trow" style="top:692px;height:22px"><svg viewBox="0 0 20 20"><path d="M4.500 6 L15.500 3.500 V14.500 L4.500 17 Z" fill="#fdfdfd" stroke="#333" stroke-width="1"/><path d="M10 1.500 V19" stroke="#333" stroke-width="1" stroke-dasharray="2.500 1.600"/></svg><span class="tx" style="">Plane10</span></div>
<div class="trow" style="top:714px;height:22px"><span class="ar"></span><svg viewBox="0 0 20 20"><path d="M3.500 5 L7 2.500 H17.500 V14.500 L14.500 17.500 H3.500 Z" fill="#eeeeee" stroke="#444" stroke-width=".9"/><rect x="3.500" y="5" width="11" height="12.500" fill="#f6f6f6" stroke="#444" stroke-width=".9"/><path d="M14.500 5 L17.500 2.500" stroke="#444" stroke-width=".8"/><rect x="6.200" y="7.500" width="6" height="7.500" fill="#fff" stroke="#174a6e" stroke-width="1"/><path d="M9.200 7.500 H12.200 V15 H6.200 V12 H9.200 Z" fill="#2f80b5"/></svg><span class="tx" style="">Cut-Extrude27</span></div>
<div class="trow" style="top:736px;height:22px"><span class="ar"></span><svg viewBox="0 0 20 20"><path d="M3.500 5 L7 2.500 H17.500 V14.500 L14.500 17.500 H3.500 Z" fill="#eeeeee" stroke="#444" stroke-width=".9"/><rect x="3.500" y="5" width="11" height="12.500" fill="#f6f6f6" stroke="#444" stroke-width=".9"/><path d="M14.500 5 L17.500 2.500" stroke="#444" stroke-width=".8"/><rect x="6.200" y="7.500" width="6" height="7.500" fill="#fff" stroke="#174a6e" stroke-width="1"/><path d="M9.200 7.500 H12.200 V15 H6.200 V12 H9.200 Z" fill="#2f80b5"/></svg><span class="tx" style="">Cut-Extrude24</span></div>
<div class="trow" style="top:758px;height:22px"><span class="ar"></span><svg viewBox="0 0 20 20"><path d="M3.500 5 L7 2.500 H17.500 V14.500 L14.500 17.500 H3.500 Z" fill="#eeeeee" stroke="#444" stroke-width=".9"/><rect x="3.500" y="5" width="11" height="12.500" fill="#f6f6f6" stroke="#444" stroke-width=".9"/><path d="M14.500 5 L17.500 2.500" stroke="#444" stroke-width=".8"/><rect x="6.200" y="7.500" width="6" height="7.500" fill="#fff" stroke="#174a6e" stroke-width="1"/><path d="M9.200 7.500 H12.200 V15 H6.200 V12 H9.200 Z" fill="#2f80b5"/></svg><span class="tx" style="">pin</span></div>
<div class="trow" style="top:780px;height:22px"><svg viewBox="0 0 20 20"><path d="M3 17 L18 3.500" stroke="#333" stroke-width="1" stroke-dasharray="5 1.500 1.500 1.500"/></svg><span class="tx" style="">Axis1</span></div>
<div class="trow" style="top:802px;height:22px"><span class="ar"></span><svg viewBox="0 0 20 20"><path d="M3.500 5 L7 2.500 H17.500 V14.500 L14.500 17.500 H3.500 Z" fill="#eeeeee" stroke="#444" stroke-width=".9"/><rect x="3.500" y="5" width="11" height="12.500" fill="#f6f6f6" stroke="#444" stroke-width=".9"/><path d="M14.500 5 L17.500 2.500" stroke="#444" stroke-width=".8"/><rect x="6.200" y="7.500" width="6" height="7.500" fill="#fff" stroke="#174a6e" stroke-width="1"/><path d="M9.200 7.500 H12.200 V15 H6.200 V12 H9.200 Z" fill="#2f80b5"/></svg><span class="tx" style="">Cut-Extrude14</span></div>
<div class="trow" style="top:824px;height:22px"><span class="ar"></span><svg viewBox="0 0 20 20"><path d="M3.500 5 L7 2.500 H17.500 V14.500 L14.500 17.500 H3.500 Z" fill="#eeeeee" stroke="#444" stroke-width=".9"/><rect x="3.500" y="5" width="11" height="12.500" fill="#f6f6f6" stroke="#444" stroke-width=".9"/><path d="M14.500 5 L17.500 2.500" stroke="#444" stroke-width=".8"/><rect x="6.200" y="7.500" width="6" height="7.500" fill="#fff" stroke="#174a6e" stroke-width="1"/><path d="M9.200 7.500 H12.200 V15 H6.200 V12 H9.200 Z" fill="#2f80b5"/></svg><span class="tx" style="">Cut-Extrude15</span></div>
<div class="trow" style="top:846px;height:22px"><span class="ar"></span><svg viewBox="0 0 20 20"><path d="M1.500 3 H7 L8.500 5 H18.500 V18 H1.500 Z" fill="#3f97cc" stroke="#174a6e" stroke-width="1"/><path d="M2.500 17 L17.500 6 V17 Z" fill="#d4d4d4"/><path d="M2.500 6 H17.500 L2.500 17 Z" fill="#4aa3d6"/></svg><span class="tx" style="">Threads</span></div>
<div class="trow" style="top:868px;height:22px"><span class="ar"></span><svg viewBox="0 0 20 20"><defs><linearGradient id="fb" x1="0" y1="0" x2="0" y2="1"><stop offset="0" stop-color="#56addf"/><stop offset="1" stop-color="#2474a8"/></linearGradient></defs><path d="M1.500 3 H7 L8.500 5 H18.500 V18 H1.500 Z" fill="url(#fb)" stroke="#174a6e" stroke-width="1"/></svg><span class="tx" style="">Fillets and chamfers</span></div>
<div class="trow" style="top:890px;height:13px"><span class="ar"></span><svg viewBox="0 0 20 20"><path d="M1.500 3 H7 L8.500 5 H18.500 V18 H1.500 Z" fill="#f0f0f0" stroke="#c8c8c8" stroke-width="1"/></svg><span class="tx" style="color:#b0b0b0">Design Change</span></div>
<div class="abs" style="left:212px;top:77px;width:15px;height:826px;background:#f0f0f0"></div>
<div class="abs" style="left:212px;top:96px;width:15px;height:768px;background:#cdcdcd"></div>
<svg class="abs" style="left:212px;top:79px" width="15" height="12" viewBox="0 0 15 12"><path d="M3.500 8 L7.500 4 L11.500 8" fill="none" stroke="#444" stroke-width="1.400"/></svg>
<svg class="abs" style="left:212px;top:887px" width="15" height="12" viewBox="0 0 15 12"><path d="M3.500 4 L7.500 8 L11.500 4" fill="none" stroke="#444" stroke-width="1.400"/></svg>
<div class="abs" style="left:0;top:903px;width:212px;height:15px;background:#f0f0f0"></div>
<div class="abs" style="left:18px;top:903px;width:150px;height:15px;background:#cdcdcd"></div>
<svg class="abs" style="left:2px;top:903px" width="12" height="15" viewBox="0 0 12 15"><path d="M8 3.500 L4 7.500 L8 11.500" fill="none" stroke="#444" stroke-width="1.400"/></svg>
<svg class="abs" style="left:196px;top:903px" width="12" height="15" viewBox="0 0 12 15"><path d="M4 3.500 L8 7.500 L4 11.500" fill="none" stroke="#444" stroke-width="1.400"/></svg>
</div><div id="split"></div>
<div id="view">
<!-- heads-up toolbar: coordinates absolute page via viewBox -->
<svg class="abs" style="left:366px;top:3px" width="330" height="26" viewBox="596 120 330 26">
<defs><linearGradient id="gl" x1="0" y1="0" x2="1" y2="1"><stop offset="0" stop-color="#fff"/><stop offset="1" stop-color="#d7e3ea"/></linearGradient>
<linearGradient id="bx" x1="0" y1="0" x2="0" y2="1"><stop offset="0" stop-color="#a9d3ec"/><stop offset="1" stop-color="#5ea5cf"/></linearGradient></defs>
<!-- zoom fit -->
<circle cx="611.500" cy="129.500" r="6" fill="url(#gl)" stroke="#888" stroke-width="1"/><path d="M607 134.500 L601.500 140" stroke="#4d93bf" stroke-width="2.800" stroke-linecap="round"/><path d="M611.500 126 V133 M608 129.500 H615" stroke="#666" stroke-width=".8"/>
<!-- zoom area -->
<rect x="633.500" y="123.500" width="10" height="11" fill="none" stroke="#333" stroke-width=".9" stroke-dasharray="2 1.300"/><circle cx="636" cy="130.500" r="6" fill="url(#gl)" stroke="#888" stroke-width="1"/><path d="M631.500 135.500 L626.500 140.500" stroke="#4d93bf" stroke-width="2.800" stroke-linecap="round"/>
<!-- prev view -->
<path d="M653 136 L664.500 124.500 L669 127.500 L658 140.500 Z" fill="#e8e8e8" stroke="#777" stroke-width="1"/><ellipse cx="655.500" cy="138.300" rx="3" ry="2" fill="#fafafa" stroke="#777" stroke-width=".8" transform="rotate(35 655.500 138.300)"/><path d="M670 136.500 H663" stroke="#2f80b5" stroke-width="1.800"/><path d="M664.500 133 L660 136.500 L664.500 140 Z" fill="#2f80b5"/>
<!-- section -->
<path d="M678.500 130 Q678.500 124 687 124 Q695.500 124 695.500 129 V137 L691 139.500 V132 Q687 129.500 683 132 V140 L678.500 138.500 Z" fill="#d9d9d9" stroke="#555" stroke-width=".9"/><path d="M678.500 130 L683 132 V140 L678.500 138.500 Z M691 132 L695.500 129.500 V137 L691 139.500 Z" fill="#4d93bf" stroke="#1c4f73" stroke-width=".7"/>
<!-- view orient -->
<path d="M704.500 128.500 L709 123.500 H721.500 V135.500 L717 140.500 H704.500 Z" fill="#f4f4f4" stroke="#444" stroke-width=".9"/><rect x="704.500" y="128.500" width="12.500" height="12" fill="url(#bx)" stroke="#1c4f73" stroke-width=".9"/><path d="M717 128.500 L721.500 123.500" stroke="#444" stroke-width=".8"/><path d="M729.500 131 H735.500 L732.500 134.500 Z" fill="#8a8a8a"/>
<!-- display style -->
<path d="M745.500 126 L754 123.500 L761.500 125.500 V137 L754 140.500 L745.500 138 Z" fill="#fff" stroke="#555" stroke-width=".9"/><path d="M745.500 126 L754 128 V140.500 L745.500 138 Z" fill="url(#bx)" stroke="#1c4f73" stroke-width=".7"/><path d="M754 128 L761.500 125.500" stroke="#555" stroke-width=".8"/><path d="M769 131 H775 L772 134.500 Z" fill="#8a8a8a"/>
<!-- hide/show -->
<path d="M784 132 Q793 123 802 132 Q793 141 784 132 Z" fill="#e6e6e6" stroke="#b0b0b0" stroke-width="1"/><circle cx="793" cy="132" r="3.500" fill="#777"/><path d="M793.500 123.500 V141" stroke="#333" stroke-width="1"/><path d="M809.500 131 H815.500 L812.500 134.500 Z" fill="#8a8a8a"/>
<!-- appearance -->
<g transform="translate(832.500,130.500)"><circle r="8.500" fill="#e8332a"/><path d="M0 0 L-8.500 0 A8.500 8.500 0 0 0 0 8.500 Z" fill="#39a845"/><path d="M0 0 L0 8.500 A8.500 8.500 0 0 0 8.500 0 Z" fill="#f4c619"/><path d="M0 0 L-8.500 0 A8.500 8.500 0 0 1 0 -8.500 Z" fill="#3a82d0"/><ellipse cx="-1.500" cy="-4.500" rx="5" ry="2.500" fill="#fff" opacity=".45"/><path d="M9 -3 L11 -1 L3 8 L0 9.500 L1 6 Z" fill="#f0b43c" stroke="#7a4a10" stroke-width=".8"/></g>
<!-- scene -->
<g transform="translate(858,130)"><circle r="8" fill="#e8332a"/><path d="M0 0 L-8 0 A8 8 0 0 0 0 8 Z" fill="#39a845"/><path d="M0 0 L0 8 A8 8 0 0 0 8 0 Z" fill="#f4c619"/><path d="M0 0 L-8 0 A8 8 0 0 1 0 -8 Z" fill="#3a82d0"/><ellipse cx="-1.500" cy="-4.300" rx="4.600" ry="2.300" fill="#fff" opacity=".45"/><rect x="-9" y="6" width="18" height="5.500" fill="#222"/><path d="M-7 7 h3 v1.700 h-3 Z M-1 7 h3 v1.700 h-3 Z M5 7 h3 v1.700 h-3 Z M-4 9.200 h3 v1.700 h-3 Z M2 9.200 h3 v1.700 h-3 Z" fill="#ddd"/></g>
<path d="M875 131 H881 L878 134.500 Z" fill="#8a8a8a"/>
<!-- monitor -->
<rect x="890.500" y="124.500" width="17" height="11.500" fill="#d9d9d9" stroke="#555" stroke-width="1"/><path d="M899 136 V139 M894.500 139.500 H903.500" stroke="#444" stroke-width="1.400"/><path d="M915.500 131 H921.500 L918.500 134.500 Z" fill="#8a8a8a"/>
</svg>
<!-- doc window controls -->
<svg class="abs" style="left:932px;top:6px" width="126" height="18" viewBox="1162 123 126 18">
<g fill="none" stroke="#a8a8a8" stroke-width="1.100"><rect x="1167.500" y="126.500" width="11" height="11.500"/><rect x="1193.500" y="126.500" width="11" height="11.500"/><rect x="1244.500" y="129.500" width="9.500" height="7"/><rect x="1248.500" y="126.500" width="9.500" height="7"/><path d="M1272 127 L1282 137 M1282 127 L1272 137"/></g>
<path d="M1173.500 129.500 L1170.500 132.500 L1173.500 135.500 Z M1198.500 129.500 L1201.500 132.500 L1198.500 135.500 Z" fill="#a8a8a8"/><rect x="1220" y="136" width="9.500" height="1.600" fill="#a8a8a8"/><rect x="1244.500" y="129.500" width="9.500" height="7" fill="#fff" stroke="#a8a8a8" stroke-width="1.100"/>
</svg>
<!-- splitter handle -->
<div class="abs" style="left:0;top:453px;width:7px;height:37px;background:#fff;border:1px solid #a0a0a0;border-left:none"></div>
<div class="abs" style="left:1px;top:468px;width:4px;height:5px;border-radius:2.500px;border:1px solid #9a9a9a;background:#dcdcdc"></div>
<!-- task pane tabs -->
<div class="abs" style="left:1040px;top:50px;width:26px;height:169px;background:#d9d9d9;border:1px solid #a0a0a0;border-right:none"></div>
<div class="abs" style="left:1040px;top:218px;width:27px;height:25px;background:#fff;border:1px solid #a0a0a0;border-right:none"></div>
<svg class="abs" style="left:1040px;top:50px" width="26" height="194" viewBox="1270 167 26 194">
<path d="M1270 191 H1296 M1270 215 H1296 M1270 239 H1296 M1270 262.500 H1296 M1270 286.500 H1296 M1270 310.500 H1296" stroke="#a0a0a0" stroke-width="1"/>
<!-- home -->
<path d="M1274.500 179 L1283 171 L1291.500 179" fill="none" stroke="#1f5a85" stroke-width="2"/><path d="M1277 178.500 V186.500 H1289 V178.500 L1283 173 Z" fill="#fff" stroke="#333" stroke-width="1"/><rect x="1281.500" y="181" width="3.500" height="5.500" fill="#fff" stroke="#333" stroke-width=".9"/>
<!-- library -->
<g fill="#f5f5f5" stroke="#333" stroke-width=".9"><path d="M1277 197.500 L1280 195.500 L1282.500 196.500 V208.500 L1280 210.500 L1277 209 Z"/><path d="M1281 197 L1284 195 L1286.500 196 V208 L1284 210.500 L1281 209 Z"/><path d="M1285 196.500 L1288 194.500 L1290.500 195.500 V207.500 L1288 210 L1285 208.500 Z"/></g>
<!-- folder -->
<path d="M1274.500 220 H1280.500 L1282 222.500 H1290 V233.500 H1274.500 Z" fill="#e6e6e6" stroke="#333" stroke-width="1"/><path d="M1277.500 225.500 H1293.500 L1290 233.500 H1274.500 Z" fill="#f8f8f8" stroke="#333" stroke-width="1"/>
<!-- view palette -->
<rect x="1275.500" y="243.500" width="16" height="14.500" rx="1.500" fill="#fff" stroke="#333" stroke-width="1"/><path d="M1277.500 246 H1284.500 V248.500 H1282.500 V252.500 H1286 V255.500 H1277.500 V252.500 H1280 V248.500 H1277.500 Z" fill="#f3c21b" stroke="#8a6a00" stroke-width=".6"/><rect x="1286" y="245.500" width="3.500" height="3" fill="#f3c21b" stroke="#8a6a00" stroke-width=".5"/><rect x="1288" y="250.500" width="2.500" height="6" fill="#ddd" stroke="#555" stroke-width=".5"/>
<!-- appearances ball -->
<g transform="translate(1283,274.500)"><circle r="7.800" fill="#e8332a"/><path d="M0 0 L-7.800 0 A7.800 7.800 0 0 0 0 7.800 Z" fill="#39a845"/><path d="M0 0 L0 7.800 A7.800 7.800 0 0 0 7.800 0 Z" fill="#f4c619"/><path d="M0 0 L-7.800 0 A7.800 7.800 0 0 1 0 -7.800 Z" fill="#3a82d0"/><ellipse cx="-1.500" cy="-4.200" rx="4.500" ry="2.200" fill="#fff" opacity=".45"/></g>
<!-- custom props -->
<rect x="1275.500" y="290.500" width="16" height="16" fill="#fff" stroke="#333" stroke-width="1"/><rect x="1275.500" y="290.500" width="16" height="3" fill="#2f80b5"/><rect x="1277.500" y="296" width="3.500" height="2" fill="#2f80b5"/><rect x="1277.500" y="299.500" width="3.500" height="2" fill="#2f80b5"/><rect x="1277.500" y="303" width="3.500" height="2" fill="#2f80b5"/><path d="M1282.500 297 H1289.500 M1282.500 300.500 H1289.500 M1282.500 304 H1289.500" stroke="#333" stroke-width=".9"/>
<!-- forum -->
<rect x="1275.500" y="315.500" width="13" height="10" fill="#fff" stroke="#333" stroke-width="1"/><path d="M1277.500 318.500 H1286.500 M1277.500 321 H1284" stroke="#333" stroke-width=".9"/><path d="M1279 327 H1286 M1282.500 325.500 V328.500" stroke="#333" stroke-width="1"/><path d="M1282.500 323.500 L1286.500 321.500 L1291.500 323 V328 L1287.500 330.500 L1282.500 328.500 Z" fill="#f3c21b" stroke="#8a6a00" stroke-width=".7"/><path d="M1285.500 319.500 L1288.500 318 L1291.500 319.500 V322.500 L1288.500 324 L1285.500 322.500 Z" fill="#4d93bf" stroke="#1c4f73" stroke-width=".6"/>
<!-- 3dx compass -->
<defs><radialGradient id="cmp" cx=".4" cy=".35" r=".7"><stop offset="0" stop-color="#6ea6d0"/><stop offset=".55" stop-color="#1a5a92"/><stop offset="1" stop-color="#0a2f5a"/></radialGradient></defs>
<circle cx="1283" cy="346.500" r="10" fill="url(#cmp)"/><circle cx="1283" cy="346.500" r="3.600" fill="none" stroke="#cfe2f0" stroke-width=".8"/><path d="M1281.800 344.700 L1285 346.500 L1281.800 348.300 Z" fill="#fff"/><path d="M1276 340 L1290 353 M1290 340 L1276 353" stroke="#9cc1dc" stroke-width=".5"/>
</svg>
<!-- triad -->
<svg class="abs" style="left:30px;top:843px" width="50" height="54" viewBox="260 960 50 54">
<text x="268" y="971" font-size="7.500" fill="#2e9e3e" font-family="Liberation Sans" text-anchor="middle">Y</text>
<path d="M268.500 979 V1006" stroke="#1f9e2f" stroke-width="3"/><path d="M264.500 984.500 L268.500 976.500 L272.500 984.500 Z" fill="#1f9e2f"/>
<path d="M269.500 1005.500 L281.500 999" stroke="#f0a0a0" stroke-width="2.500"/><circle cx="282.500" cy="998.500" r="3.800" fill="#c91212"/>
<text x="291.500" y="995" font-size="7.500" fill="#e02020" font-family="Liberation Sans" text-anchor="middle">X</text>
<path d="M268.500 1005.500 L290 1008" stroke="#0b18c8" stroke-width="3"/><path d="M286.500 1003.500 L295 1007.800 L287 1012 Z" fill="#2233ee"/>
<text x="299.500" y="1009" font-size="8" font-weight="bold" fill="#2233ee" font-family="Liberation Sans" text-anchor="middle">Z</text>
</svg>
<svg class="abs" style="left:0;top:0" width="1066" height="943" viewBox="230 117 1066 943">
<defs>
<filter id="b1" x="-10%" y="-10%" width="120%" height="120%"><feGaussianBlur stdDeviation="1.2"/></filter>
<filter id="b3" x="-10%" y="-10%" width="120%" height="120%"><feGaussianBlur stdDeviation="3"/></filter>
<filter id="b6" x="-20%" y="-20%" width="140%" height="140%"><feGaussianBlur stdDeviation="6"/></filter>
<clipPath id="sil"><path id="silp" d="M549 348 C570 344 600 344 628 345.500 L647 349 L699 356 L741 363 L762 366.500 L787 370.500 C800 372 812 378 818 388 C825 398 829 408 830 421 C840 436 855 458 863 472 C872 488 880 499 888 507 C900 518 920 532 938 542.500 C955 553 970 561 980 565.500 C990 568.500 1000 568.500 1021 568.500 C1040 570 1060 578 1072 586 C1082 594 1086 606 1084 616 C1082 628 1076 638 1061 647.500 L1059 650 L1053 685 L1047 730 L1038 785 L1036 791 C1044 798 1048 806 1047.700 816 C1047 830 1043 842 1036 848 C1026 856 1012 860 1000 859.600 C988 859 978 857.500 973.750 856.500 C960 853 950 850 942.500 847 C930 841 922 837 917.500 834.600 L875.800 811.700 L846.700 791 L823.750 772 C819 781 813 788 807 790.500 C800 794 793 795 786 794 C775 793.800 762 791 752.600 789.600 C745 788.800 739 788.500 734.400 787 C728 784.500 724.500 780.500 721.500 776.700 L712.700 763 L707.500 751 L705 751 L657.500 740 L636.700 740 C628 744 620 750 603 757 C595 760 590 760 586.700 759 C570 757 560 755 553 753 C540 749 534 746 530 742.500 C522 734 518 727 517 722 C513 712 511 705 511.700 701 C510 690 510 685 510.600 680 C511 672 512 668 511.700 665 L515 638 L517 597 L517 555 C515 540 512 525 509.600 517.500 C506 505 503 495 501 488 L497 476 C493 460 491 445 491 434 C491 425 491.500 418 492 413 C494 404 496 398 499 392 C503 384 507 377 512 372 C518 365 524 359 530 355 C537 351 543 349 549 348 Z"/></clipPath>
<!-- cylinder shading across the top cylinder (perpendicular to axis) -->
<linearGradient id="gcyl" gradientUnits="userSpaceOnUse" x1="520" y1="345" x2="509" y2="478">
 <stop offset="0" stop-color="#8c8d8c"/><stop offset=".08" stop-color="#7c7d7c"/><stop offset=".2" stop-color="#5e5f5f"/><stop offset=".33" stop-color="#6b6c6c"/><stop offset=".45" stop-color="#969796"/><stop offset=".55" stop-color="#8a8b8a"/><stop offset=".63" stop-color="#6e6f6f"/><stop offset=".68" stop-color="#7f807f"/><stop offset=".74" stop-color="#4a4b4b"/><stop offset=".85" stop-color="#3c3d3d"/><stop offset=".95" stop-color="#505151"/><stop offset="1" stop-color="#5a5b5b"/></linearGradient>
<linearGradient id="gcylR" gradientUnits="userSpaceOnUse" x1="735" y1="362" x2="720" y2="512">
 <stop offset="0" stop-color="#7a7b7a"/><stop offset=".08" stop-color="#9c9d9c"/><stop offset=".15" stop-color="#8e8f8e"/><stop offset=".3" stop-color="#6e6f6f"/><stop offset=".42" stop-color="#5c5d5d"/><stop offset=".5" stop-color="#404141"/><stop offset=".6" stop-color="#3c3d3d"/><stop offset=".7" stop-color="#464747"/><stop offset=".85" stop-color="#3e3f3f"/><stop offset="1" stop-color="#4a4b4b"/></linearGradient>
<linearGradient id="gflat" gradientUnits="userSpaceOnUse" x1="610" y1="390" x2="735" y2="360">
 <stop offset="0" stop-color="#a6a8a5"/><stop offset=".5" stop-color="#c6c8c5"/><stop offset="1" stop-color="#b4b6b3"/></linearGradient>
<linearGradient id="gfloor" gradientUnits="userSpaceOnUse" x1="640" y1="398" x2="628" y2="500">
 <stop offset="0" stop-color="#a2a4a1"/><stop offset=".15" stop-color="#929491"/><stop offset=".29" stop-color="#808280"/><stop offset=".36" stop-color="#5e605e"/><stop offset=".46" stop-color="#484a49"/><stop offset=".5" stop-color="#3e403f"/><stop offset=".52" stop-color="#848684"/><stop offset=".62" stop-color="#8a8c8a"/><stop offset=".68" stop-color="#686a68"/><stop offset=".77" stop-color="#606260"/><stop offset=".82" stop-color="#888a88"/><stop offset=".95" stop-color="#929492"/><stop offset="1" stop-color="#7a7c7a"/></linearGradient>
<linearGradient id="gbody" gradientUnits="userSpaceOnUse" x1="640" y1="480" x2="610" y2="700">
 <stop offset="0" stop-color="#56595d"/><stop offset=".05" stop-color="#54575b"/><stop offset=".24" stop-color="#505356"/><stop offset=".35" stop-color="#3c3d3f"/><stop offset=".43" stop-color="#2f3031"/><stop offset=".5" stop-color="#3a3a3b"/><stop offset=".57" stop-color="#5e5e5f"/><stop offset=".64" stop-color="#6c6c6c"/><stop offset=".715" stop-color="#626262"/><stop offset=".79" stop-color="#585858"/><stop offset=".857" stop-color="#4a4a4a"/><stop offset="1" stop-color="#3a3a3a"/></linearGradient>
<linearGradient id="glug" gradientUnits="userSpaceOnUse" x1="600" y1="672" x2="590" y2="762">
 <stop offset="0" stop-color="#3a3b3c"/><stop offset=".06" stop-color="#686969"/><stop offset=".14" stop-color="#58595a"/><stop offset=".25" stop-color="#343536"/><stop offset=".4" stop-color="#393a3b"/><stop offset=".5" stop-color="#505152"/><stop offset=".62" stop-color="#565758"/><stop offset=".75" stop-color="#3a3b3c"/><stop offset=".9" stop-color="#242526"/><stop offset="1" stop-color="#1c1d1e"/></linearGradient>
<linearGradient id="glugR" gradientUnits="userSpaceOnUse" x1="740" y1="695" x2="730" y2="790">
 <stop offset="0" stop-color="#2a2b2c"/><stop offset=".25" stop-color="#3c3d3e"/><stop offset=".5" stop-color="#6a6b6c"/><stop offset=".7" stop-color="#4a4b4c"/><stop offset=".9" stop-color="#262728"/><stop offset="1" stop-color="#202122"/></linearGradient>
<linearGradient id="gplate" gradientUnits="userSpaceOnUse" x1="760" y1="400" x2="830" y2="780">
 <stop offset="0" stop-color="#525354"/><stop offset=".5" stop-color="#4d4e4f"/><stop offset="1" stop-color="#444546"/></linearGradient>
<linearGradient id="ghole" x1="0" y1="0" x2="1" y2="0"><stop offset="0" stop-color="#0c0c0c"/><stop offset=".16" stop-color="#181818"/><stop offset=".36" stop-color="#38393a"/><stop offset=".6" stop-color="#58595a"/><stop offset=".82" stop-color="#646566"/><stop offset="1" stop-color="#474849"/></linearGradient>
<linearGradient id="gvcyl" gradientUnits="userSpaceOnUse" x1="968" y1="720" x2="1048" y2="730">
 <stop offset="0" stop-color="#1a1a1b"/><stop offset=".14" stop-color="#212222"/><stop offset=".24" stop-color="#383939"/><stop offset=".32" stop-color="#252626"/><stop offset=".5" stop-color="#2c2d2d"/><stop offset=".64" stop-color="#404141"/><stop offset=".76" stop-color="#2e2f2f"/><stop offset=".92" stop-color="#1e1f1f"/><stop offset="1" stop-color="#383939"/></linearGradient>
<linearGradient id="gfoot" gradientUnits="userSpaceOnUse" x1="940" y1="840" x2="1048" y2="835">
 <stop offset="0" stop-color="#2a2b2b"/><stop offset=".3" stop-color="#222323"/><stop offset=".55" stop-color="#2c2d2d"/><stop offset=".68" stop-color="#565757"/><stop offset=".8" stop-color="#343535"/><stop offset="1" stop-color="#262727"/></linearGradient>
<linearGradient id="gtopf" gradientUnits="userSpaceOnUse" x1="963" y1="590" x2="1083" y2="590">
 <stop offset="0" stop-color="#a9aba9"/><stop offset=".2" stop-color="#bcbebb"/><stop offset=".5" stop-color="#a6a8a5"/><stop offset=".8" stop-color="#8a8c8a"/><stop offset="1" stop-color="#5e605e"/></linearGradient>
<linearGradient id="gflside" gradientUnits="userSpaceOnUse" x1="965" y1="620" x2="1084" y2="620">
 <stop offset="0" stop-color="#2a2b2b"/><stop offset=".3" stop-color="#2e2f2f"/><stop offset=".5" stop-color="#343535"/><stop offset=".68" stop-color="#5a5b5b"/><stop offset=".8" stop-color="#464747"/><stop offset=".93" stop-color="#8a8b8b"/><stop offset="1" stop-color="#3a3b3b"/></linearGradient>
<linearGradient id="garmband" gradientUnits="userSpaceOnUse" x1="830" y1="425" x2="1000" y2="570">
 <stop offset="0" stop-color="#404141"/><stop offset=".3" stop-color="#4a4b4b"/><stop offset=".5" stop-color="#8a8b8a"/><stop offset=".7" stop-color="#d8d9d7"/><stop offset=".9" stop-color="#e6e7e5"/><stop offset="1" stop-color="#9a9b9a"/></linearGradient>
<linearGradient id="gpockR" gradientUnits="userSpaceOnUse" x1="925" y1="700" x2="968" y2="706">
 <stop offset="0" stop-color="#3a3b3b"/><stop offset=".3" stop-color="#5a5b5b"/><stop offset=".55" stop-color="#6e6f6f"/><stop offset=".72" stop-color="#8e8f8f"/><stop offset=".82" stop-color="#3a3b3b"/><stop offset="1" stop-color="#2a2b2b"/></linearGradient>
</defs>
<!-- soft shadow/halo edge -->
<use href="#silp" fill="#2c2d2e" stroke="#1a1a1a" stroke-width="1"/>
<g clip-path="url(#sil)">
<!-- ARM side wall -->
<path d="M820 400 L1000 570 L1000 870 L820 800 Z" fill="#2b2c2d"/>
<path d="M826 560 L870 600 L862 760 L822 790 Z" fill="#3d3e3f" filter="url(#b6)"/>
<path d="M850 790 L940 850 L1000 862 L1000 830 L900 800 Z" fill="#333435" filter="url(#b3)"/>
<!-- arm top band -->
<path d="M830 421 C840 436 855 458 863 472 C872 488 880 499 888 507 C900 518 920 532 938 542.500 C955 553 970 561 980 565.500 L1000 568.500 L1010 600 L985 610 L959 592.500 L938 576 L917.500 559 L896.700 538 L875.800 513 L855 484 L832 442.500 Z" fill="#303131"/>
<path d="M870 486 C880 499 888 507 900 518 C920 532 938 542.500 955 553 C970 561 980 565.500 995 568.500 L975 580 L940 560 L905 535 L885 512 Z" fill="#f4f5f3" filter="url(#b3)"/><path d="M900 522 C920 536 940 548 958 557 C972 564 985 568 1000 570 L985 576 L950 560 L915 540 Z" fill="#fafafa" filter="url(#b1)"/>
<path d="M833 427 C846 448 861 472 874 490" stroke="#a8a9a8" stroke-width="3.200" fill="none" filter="url(#b1)"/>
<path d="M832 442.500 L855 484 L875.800 513 L896.700 538 L917.500 559 L938 576 L959 592.500" stroke="#111" stroke-width=".9" fill="none"/>
<ellipse cx="905" cy="526" rx="15" ry="3" transform="rotate(41 905 526)" fill="#6a6b6b" stroke="#151515" stroke-width=".8"/>
<!-- pocket -->
<path id="pock" d="M863.300 599.600 C863.500 588 868 580 875.800 578.750 L892.500 578.750 L938.300 605.800 L959 622.500 C966 628 969 636 968.500 643 L959 685 L950.800 726.700 L944.600 768 L942.500 795 C941 805 937 811 921.700 813.750 C914 813.500 908 811 903 807.500 L875.800 786.700 L859 770 C855 765 854 762 854 757.500 L855 732.500 L857 726.700 L861.250 664 L863.300 622.500 Z" fill="#2e2f30" stroke="#0e0e0e" stroke-width="1"/>
<clipPath id="pockc"><use href="#pock"/></clipPath>
<g clip-path="url(#pockc)">
 <path d="M863 580 L893 579 L889 600 L884 760 L864 775 L850 760 Z" fill="#2c2d2e"/>
 <path d="M870 580 L878 580 L874 770 L866 770 Z" fill="#3e3f40" filter="url(#b1)"/>
 <path d="M892 579 L968 632 L960 650 L940 640 L889 600 Z" fill="#252626"/>
 <path d="M895 583 L962 628" stroke="#8a8b8b" stroke-width="2.500" filter="url(#b1)"/>
 <path d="M940 640 L972 640 L948 800 L930 815 L915 800 Z" fill="url(#gpockR)"/>
 <path d="M889 600 L940 640 L915 800 L884 760 Z" fill="#2e2f30"/>
 <path d="M852 756 L884 760 L915 800 L930 815 L900 812 L856 775 Z" fill="#4a4b4c"/>
 <path d="M860 765 L905 805" stroke="#7a7b7c" stroke-width="3" filter="url(#b1)"/>
 <path d="M889 600 L884 760 L915 800 M884 760 L856 762 M889 600 L940 640 L915 800" stroke="#0c0c0c" stroke-width=".8" fill="none"/>
</g>
<!-- inner pocket outline (fillet edge) -->
<path d="M869 600 C869 590 872 585 879 584 L891 584 L936 610 L955 626 C961 631 963 637 962.500 643 L953 686 L945 727 L939 768 L937 793 C936 801 933 806 921 808 C915 808 910 806 906 803 L879 782.500 L864 767.500 C860.500 763.500 860 761 860 757.500 L861 733 L863 727 L867 664 Z" fill="none" stroke="#0e0e0e" stroke-width=".7"/>
<!-- bottom foot -->
<path d="M950 812 C952 828 975 838 1000 837 C1025 836 1044 826 1047.700 812 L1050 820 L1040 850 L1000 862 L960 856 L942.500 847 L938 816 Z" fill="url(#gfoot)"/>
<path d="M976 838 L972 857" stroke="#0d0d0d" stroke-width=".8"/>
<ellipse cx="999" cy="812" rx="48.500" ry="19" transform="rotate(-3 999 812)" fill="#262727" stroke="#0d0d0d" stroke-width=".9"/>
<path d="M955 819 C966 834 1030 836 1044 817" stroke="#8a8b8b" stroke-width="2.200" fill="none" filter="url(#b1)"/>
<path d="M953 812 C960 826 1035 828 1046 809" stroke="#0d0d0d" stroke-width=".7" fill="none"/>
<path d="M958 806 C972 822 1024 822 1040 802" stroke="#565757" stroke-width="3.500" fill="none" filter="url(#b1)"/>
<!-- vertical cylinder -->
<path d="M978 647 L1060 648 L1037 792 C1030 806 1008 814 990 814 C972 814 958 812 951 808 Z" fill="url(#gvcyl)"/>
<path d="M1011 647 L987 813 M1031 650 L1011 808" stroke="#0d0d0d" stroke-width=".8" fill="none"/>
<path d="M978 647 L951 808 M1037 792 C1030 806 1008 814 990 814 C972 814 958 812 951 808" stroke="#0d0d0d" stroke-width=".9" fill="none"/>
<!-- between pocket and cylinder -->
<path d="M966 636 L980 648 L952 810 L938 814 Z" fill="#4c4d4d"/><path d="M970 645 L944 808" stroke="#6e6f6f" stroke-width="3" filter="url(#b1)"/><path d="M977 649 L950 808" stroke="#1c1c1c" stroke-width="2.500" filter="url(#b1)"/>
<!-- flange side -->
<path d="M963 590 C963 600 975 612 1000 622 L1009 635 L1011 647.500 L1042.500 651.700 L1061 647.500 C1076 638 1082 628 1084 616 C1086 606 1084 596 1083 590 Z" fill="url(#gflside)"/>
<path d="M1011 647.500 L1042.500 651.700 L1061 647.500 L1078 637" stroke="#0d0d0d" stroke-width=".9" fill="none"/>
<path d="M1009 635 C1030 640 1060 634 1080 618" stroke="#0d0d0d" stroke-width=".7" fill="none"/>
<!-- flange top face -->
<ellipse cx="1023" cy="591" rx="60.500" ry="23" fill="url(#gtopf)" stroke="#0d0d0d" stroke-width=".9" transform="rotate(2 1023 591)"/>
<path d="M968 580 C975 574 990 569 1000 568.500 L985 566 L960 556 L950 565 Z" fill="#cfd0ce" filter="url(#b1)"/>
<ellipse cx="1024" cy="588.500" rx="31" ry="12.500" fill="#0c0c0c" transform="rotate(2 1024.800 589.500)"/>
<ellipse cx="1024" cy="588.500" rx="35" ry="15" fill="none" stroke="#0d0d0d" stroke-width=".8" transform="rotate(2 1024.800 589.500)"/>
<path d="M1030 602 C1045 601 1054 596 1056.500 590" stroke="#3c3d3d" stroke-width="3" fill="none" filter="url(#b1)"/>
<!-- BODY: middle concave -->
<path d="M485 470 L497 476 L760 520 L770 720 L505 672 Z" fill="url(#gbody)"/>
<!-- lower left lug -->
<path d="M505 660 L511.700 665 L640 688 L645 760 L500 765 Z" fill="url(#glug)"/>
<!-- lower right lug -->
<path d="M700 696 L765 708 L800 800 L700 790 Z" fill="url(#glugR)"/>
<!-- bottom recess -->
<path id="rec" d="M553 676 C558 668.500 568 666.500 576 668 L690 688.500 C700 691 706 696 707.500 705 L707.500 752 L657.500 741 L636.700 741 C628 745 620 751 603 758 C595 761 590 761 586.700 760 C575 758 565 750 560 735 C555 720 552 700 553 670 Z" fill="#1f2021" stroke="#0d0d0d" stroke-width=".9"/>
<clipPath id="recc"><use href="#rec"/></clipPath>
<g clip-path="url(#recc)">
 <path d="M576 668 L707 691 L707 703 L590 683 Z" fill="#3a3c3f"/>
 <path d="M595 684 L707 704 L707 738 L640 728 C625 725 610 710 600 690 Z" fill="#3c3f44"/>
 <path d="M598 690 L707 712" stroke="#565a60" stroke-width="5" filter="url(#b3)"/>
 <path d="M600 700 C612 722 630 730 707 740" stroke="#26272a" stroke-width="5" filter="url(#b1)" fill="none"/>
 <path d="M566 668 C556 690 566 740 590 756 C610 760 625 748 636 741 C615 742 590 725 585 680 Z" fill="#2d2e30"/>
 <path d="M570 690 C572 730 590 748 615 748" stroke="#4a4b4d" stroke-width="5" fill="none" filter="url(#b3)"/>
 <path d="M563 675 C563 710 575 745 598 757 M572 668 C568 700 580 735 610 752 M595 684 L707 704 M598 692 C610 720 630 729 650 731 L707 740" stroke="#0c0c0c" stroke-width=".8" fill="none"/>
</g>
<path d="M556.500 678 C561 671 570 669.500 577 671 L689 691.500 C697 693.500 702.500 698 704.500 706" stroke="#111" stroke-width=".7" fill="none"/>
<!-- UPPER CYLINDER: left band -->
<path d="M480 340 L628 345 L599 347.700 C580 353 566 360 559.600 365.400 C548 378 543 388 540.800 396.700 C536 410 534.500 420 534.600 430 C534 445 535 455 536.700 463 C539 472 546 479 553 482 L497 476 L480 470 Z" fill="url(#gcyl)"/>
<!-- right band -->
<path d="M740.800 365.400 L770 368 L765 520 L678 503 C684 502 688 500 688.750 496.700 L690.800 475.800 L688.750 446.700 C690 430 692 420 697 409 C701 398 706 390 711.700 384 C717 377 723 372 728 369.600 Z" fill="url(#gcylR)"/>
<!-- groove left wall (fillet) -->
<path d="M628 345.500 L647 349 L595 395.600 L580 396 C576 410 573 425 574 446 C575 465 580 478 590 488 L553 482 C546 479 539 472 536.700 463 C535 455 534 445 534.600 430 C534.500 420 536 410 540.800 396.700 C543 388 548 378 559.600 365.400 C566 360 580 353 599 347.700 Z" fill="#404141"/>
<path d="M601 349 C578 360 553 388 545 425 C541 452 546 470 557 480" stroke="#5e5f5f" stroke-width="5" fill="none" filter="url(#b1)"/>
<path d="M612 352 C590 366 566 392 562 425 C560 450 565 470 578 483" stroke="#2c2d2d" stroke-width="6" fill="none" filter="url(#b3)"/>
<path d="M570 400 C565 420 565 450 572 470" stroke="#7e7f7e" stroke-width="3" fill="none" filter="url(#b3)"/>
<path d="M646 351 L600 392" stroke="#8c8d8c" stroke-width="7" fill="none" filter="url(#b3)"/>
<path d="M628 348 L588 380" stroke="#585959" stroke-width="6" fill="none" filter="url(#b3)"/>
<!-- floor -->
<path d="M595 395.600 L699 407 C694 420 690 432 688.750 446.700 L690.800 475.800 L688.750 496.700 C688 500 684 502 678 503 L590 488 C580 478 575 465 574 446 C573 425 576 410 582 397 Z" fill="url(#gfloor)"/>
<path d="M585 398 C577 420 577 460 592 487" stroke="#4a4b4a" stroke-width="5" fill="none" filter="url(#b3)"/>
<!-- flat top -->
<path d="M647 348.750 L699 356 L741 363 L740.800 365.400 C735 366.500 731 368 728 369.600 C722 373 716 378 711.700 384 C706 391 701 399 699 407 L595 395.600 Z" fill="url(#gflat)"/>
<!-- hole on flat -->
<ellipse cx="656" cy="396.500" rx="20.500" ry="11" fill="#5a5b5a" stroke="#0d0d0d" stroke-width=".9" transform="rotate(-12 656 396.500)"/>
<ellipse cx="659" cy="398.500" rx="13" ry="7.500" fill="#0b0b0b" transform="rotate(-12 659 398.500)"/>
<path d="M640 398 C648 388 665 384 675 390" stroke="#2a2b2a" stroke-width="3" fill="none" filter="url(#b1)"/>
<!-- edges on top -->
<path d="M599 347.700 C580 353 566 360 559.600 365.400 C548 378 543 388 540.800 396.700 C536 410 534.500 420 534.600 430 C534 445 535 455 536.700 463 C539 472 546 479 553 482 L678 503 C684 502 688 500 688.750 496.700 L690.800 475.800 L688.750 446.700 C690 430 692 420 697 409 C701 398 706 390 711.700 384 C717 377 723 372 728 369.600 C731 368 735 366.500 740.800 365.400" stroke="#0d0d0d" stroke-width=".9" fill="none"/>
<path d="M647 348.750 L595 395.600 L699 407 M549 443.500 L686.700 455 M574 395 C565 410 565 460 590 487 M595 395.600 C585 385 575 380 572 378" stroke="#0d0d0d" stroke-width=".8" fill="none"/>
<path d="M607 347 C585 355 568 364 563 370 C552 383 547 393 545 402 C541 415 539 425 539.500 433 C539 446 540 455 541.500 461 C543.500 468 549 474 555 477 L676 497.500" stroke="#0d0d0d" stroke-width=".6" fill="none"/>
<!-- body/upper separation lines -->
<path d="M497 476 L553 482 M678 503 L742 510 M511.700 665 L553 672 M707 702 L762 711" stroke="#0d0d0d" stroke-width=".8" fill="none"/>
<!-- PLATE -->
<path id="plate" d="M787 370.500 C800 372 812 378 818 388 C825 398 829 408 830 421 L831 442.500 L828 473.750 L823.750 496.700 L821.700 525.800 L823.750 557 L828 610 L834 643 L841.500 668 L848.750 685 L845.600 701.700 L839.400 726.700 L832 751.700 L823.750 776.700 C819 783 813 788 807 790.500 C800 794 793 795 786 794 C778 791 770 786 765.800 780 C760 772 756 762 754.400 753 C753 745 753 738 753.300 732 L757.500 705 L761.700 669.600 L764.800 638.300 L764.800 596.700 L761.700 555 L757.500 538 L750 517.500 L743 496.700 C739 485 737.500 475 737.700 465.400 L737.700 434 C738 420 739 410 740.800 403 C742 395 744 389 747 384 C751 378 756 374 761.700 371.700 C768 369.500 778 369.500 787 370.500 Z" fill="url(#gplate)" stroke="#0d0d0d" stroke-width="1"/>
<!-- chamfer band -->
<path d="M790 373.500 C778 372.500 770 373 765 375 C759 377.500 755 381 751 386.500 C748 391 746 397 744.800 404 C743 411 742 421 741.700 434 L741.700 465 C741.500 474 743 484 747 495.500 L754 516.500 L761.500 537 L765.700 555 L768.800 596.700 L768.800 638.300 L765.700 670 L761.500 705.500 L757.300 732 C757 738 757 745 758.400 752.500 C760 761 763.500 770 769 777.500 C773 783 780 788 787 790.500" stroke="#0d0d0d" stroke-width=".7" fill="none"/>
<path d="M764 373 C756 376 750 381 746 388 C742 396 740 410 739.700 434 L739.700 465 C739.500 476 741 486 745 497 L752 517 L759.500 538 L763.700 555 L766.800 597 L766.800 638 L763.700 670" stroke="#6a6b6b" stroke-width="2.200" fill="none" filter="url(#b1)"/>
<!-- holes -->
<g transform="rotate(4 788.500 456)"><ellipse cx="788.500" cy="456" rx="18" ry="33" fill="url(#ghole)" stroke="#0a0a0a" stroke-width="1.200"/><path d="M778 482 C784 489 794 489 800 480" stroke="#b8b9b8" stroke-width="2.500" fill="none" filter="url(#b1)"/><ellipse cx="776" cy="454" rx="3.500" ry="22" fill="#0a0a0a" filter="url(#b1)"/></g>
<g transform="rotate(4 792.500 538.500)"><ellipse cx="792.500" cy="538.500" rx="8.700" ry="15.600" fill="url(#ghole)" stroke="#0a0a0a" stroke-width="1.100"/><ellipse cx="794.500" cy="538.500" rx="5.500" ry="13" fill="none" stroke="#0a0a0a" stroke-width=".7"/><path d="M788 550 C791 554 796 553 799 548" stroke="#9a9b9a" stroke-width="1.600" fill="none" filter="url(#b1)"/></g>
<g transform="rotate(5 802 714.500)"><ellipse cx="802" cy="714.500" rx="17.800" ry="32" fill="url(#ghole)" stroke="#0a0a0a" stroke-width="1.200"/><path d="M791 740 C797 747 807 747 813 738" stroke="#c4c5c4" stroke-width="2.500" fill="none" filter="url(#b1)"/><ellipse cx="789.500" cy="712" rx="3.500" ry="21" fill="#0a0a0a" filter="url(#b1)"/></g>
</g>
<use href="#silp" fill="none" stroke="#141414" stroke-width="1.100"/>
</svg>

</div>
<div class="abs" style="left:1296px;top:117px;width:1px;height:943px;background:#8f8f8f"></div>
<div id="xp">
<div id="xph">
<svg class="abs" style="left:7px;top:4px" width="14" height="11" viewBox="0 0 14 11"><path d="M2 1.500 L6 5.500 L2 9.500 M7.500 1.500 L11.500 5.500 L7.500 9.500" fill="none" stroke="#1a1a1a" stroke-width="2"/></svg>
<div class="abs" style="left:0;top:2.500px;width:604px;text-align:center;font-weight:bold;font-size:11.400px;letter-spacing:-0.400px;color:#111">3DEXPERIENCE</div>
<svg class="abs" style="left:582px;top:1px" width="40" height="20" viewBox="1879 118 40 20">
<g transform="translate(1889,127.500)" fill="none" stroke="#222" stroke-width="1.200"><circle r="2.600"/><path d="M-1.400 -7 L1.400 -7 L1.800 -5 L3.300 -4.300 L5 -5.400 L6.800 -3.300 L5.600 -1.700 L6 -0.200 L7.700 0.400 L7.300 3.100 L5.400 3.400 L4.500 4.700 L5.100 6.500 L2.800 7.800 L1.500 6.300 L-0.100 6.500 L-1.100 8.100 L-3.600 7.100 L-3.500 5.200 L-4.800 4.200 L-6.700 4.500 L-7.700 2.100 L-6.200 1 L-6.300 -0.600 L-7.700 -1.700 L-6.700 -4.100 L-4.800 -3.800 L-3.600 -4.900 L-3.800 -6.800 Z" stroke-linejoin="round"/></g>
<path d="M1909.500 120.500 L1915.500 126.500 L1913.500 127.500 L1911.500 129.500 L1911 133 L1907.500 129.500 L1903 134 L1906.500 128.500 L1903 125 L1906.500 124.500 L1908.500 122.500 Z" fill="#222"/>
</svg>
</div>
<div class="abs" style="left:3px;top:24px;width:1px;height:916px;background:#e2e2e2"></div>
<div id="xpb">
<svg class="abs" style="left:4px;top:4px" width="36" height="36" viewBox="0 0 36 36">
<defs><linearGradient id="cmp2" x1="0" y1="0" x2="0" y2="1"><stop offset="0" stop-color="#8bbde0"/><stop offset="1" stop-color="#2f72a6"/></linearGradient></defs>
<circle cx="18" cy="18" r="16.500" fill="#0a5e94" opacity=".6"/><circle cx="18" cy="18" r="15.500" fill="#0a3f66"/>
<path d="M6.500 13 Q8 4 18 3.500 Q28 4 29.500 13 Q27 17 23 18 Q18 12.500 13 18 Q9 17 6.500 13 Z" fill="url(#cmp2)" opacity=".85"/>
<path d="M8 8 L13 13 M28 8 L23 13 M8 28 L12.500 23.500 M28 28 L23.500 23.500" stroke="#2f7fb5" stroke-width=".7"/>
<circle cx="18" cy="18.500" r="6.800" fill="#0e4c78" stroke="#1d6ea6" stroke-width=".9"/><path d="M15.300 14.800 L22 18.500 L15.300 22.200 Z" fill="none" stroke="#e6f0f7" stroke-width="1.100" stroke-linejoin="round"/>
<text x="18" y="9.800" font-size="5" fill="#eaf3f9" text-anchor="middle" font-family="Liberation Sans" font-style="italic" font-weight="bold">W</text><text x="6.800" y="20.300" font-size="4.600" fill="#eaf3f9" text-anchor="middle" font-family="Liberation Sans" font-weight="bold">3D</text><text x="29.300" y="20.300" font-size="5" fill="#eaf3f9" text-anchor="middle" font-family="Liberation Sans" font-style="italic" font-weight="bold">i</text><text x="18" y="31.300" font-size="4.600" fill="#eaf3f9" text-anchor="middle" font-family="Liberation Sans" font-weight="bold">V.R</text>
</svg>
<div class="abs" style="left:52px;top:12px;color:#fff;font-size:16px;white-space:nowrap;letter-spacing:-0.150px">Relations - SW Relations...</div>
<svg class="abs" style="left:245px;top:16px" width="16" height="12" viewBox="0 0 16 12"><path d="M2 3 L8 9 L14 3" fill="none" stroke="#fff" stroke-width="2.200"/></svg>
<div class="abs" style="left:264px;top:7px;width:220px;height:29px;background:#fff;border-radius:4px"></div>
<svg class="abs" style="left:410px;top:10px" width="70" height="24" viewBox="0 0 70 24"><circle cx="15" cy="10" r="6" fill="none" stroke="#666" stroke-width="1.300"/><path d="M19.500 14.500 L25.500 20.500" stroke="#666" stroke-width="1.500"/><path d="M49.500 9.500 L54.500 14.500 L59.500 9.500" fill="none" stroke="#555" stroke-width="1.400"/></svg>
<svg class="abs" style="left:492px;top:6px" width="125" height="32" viewBox="1795 149 125 32">
<path d="M1800.500 156.500 L1808.500 156.500 L1817.500 165.500 Q1818.500 167 1817.500 168.500 L1812.500 173.500 Q1811 174.500 1809.500 173.500 L1800.500 164.500 Z" fill="none" stroke="#fff" stroke-width="2" stroke-linejoin="round"/><circle cx="1804.500" cy="160.500" r="1.400" fill="#fff"/>
<path d="M1845 157 H1861 M1845 164 H1861 M1845 171 H1861" stroke="#fff" stroke-width="2.600"/>
<path d="M1877.500 153 V176" stroke="#c9dbe7" stroke-width="1.200"/>
<path d="M1890.500 157.500 L1903.500 170.500 M1903.500 157.500 L1890.500 170.500" stroke="#fff" stroke-width="3"/>
</svg>
</div>
<!-- toolbar row -->
<svg class="abs" style="left:6px;top:69px" width="617" height="46" viewBox="1303 186 617 46">
<path d="M1303 230.500 H1920" stroke="#d6d6d6" stroke-width="1"/>
<g fill="#77787b">
<path d="M1312 210 L1323.500 199.500 L1335 210 L1332 210 L1332 220 L1326.500 220 L1326.500 213.500 L1320.500 213.500 L1320.500 220 L1315 220 L1315 210 Z"/><rect x="1329" y="201" width="2.800" height="5"/>
<path d="M1640.500 200.500 Q1651.500 200.500 1654 209 L1658.500 208 L1651.500 219 L1643 211.500 L1647.500 210.500 Q1646 204 1640.500 200.500 Z"/>
<g transform="translate(1725,209)"><path d="M-2 -11 L2 -11 L2.700 -8 L5 -7 L7.700 -8.600 L10.300 -5.500 L8.500 -3 L9.200 -0.700 L12 0.300 L11.300 4.500 L8.300 4.800 L7 7 L8 10 L4.300 12 L2.200 9.600 L-0.300 9.900 L-1.900 12.400 L-5.700 10.800 L-5.500 7.800 L-7.400 6.200 L-10.400 6.800 L-12 3 L-9.600 1.300 L-9.800 -1.200 L-12 -2.800 L-10.400 -6.500 L-7.400 -6 L-5.700 -7.700 L-6 -10.700 Z"/><circle r="4.200" fill="#fff"/></g>
<path d="M1745.500 199.500 L1745.500 214 L1749.500 210.800 L1752.500 216 L1755 214.700 L1752 209.600 L1757 209 Z"/>
<path d="M1805 218 L1808.500 207 L1797.500 200.500 L1810.500 200.500 L1814.500 188 M1822.500 198 L1825.800 207.500 L1836 207.500 L1828 213.500 L1831 223 L1822.500 217 L1814 223 L1817 213.500 L1809 207.500 L1819.200 207.500 Z" transform="translate(0,0)" style="display:none"/>
<path d="M1823 198 L1826 205.800 L1834.300 206.300 L1827.900 211.700 L1830 219.800 L1823 215.300 L1816 219.800 L1818.100 211.700 L1811.700 206.300 L1820 205.800 Z"/><path d="M1776 219.800 L1778 212.500 L1790.500 200 Q1793.500 197.800 1795.800 200.200 Q1797.800 202.800 1795.600 205.400 L1783.200 217.800 Z"/>
<circle cx="1860.800" cy="209" r="11"/>
<circle cx="1899" cy="201.400" r="2.500"/><circle cx="1899" cy="209.200" r="2.500"/><circle cx="1899" cy="217" r="2.500"/>
</g>
<rect x="1859" y="206.500" width="3.800" height="9.500" fill="#fff"/><circle cx="1860.900" cy="202" r="2.200" fill="#fff"/>
<g fill="none" stroke="#77787b" stroke-width="1.600"><path d="M1680 209.500 H1684 L1695 201 M1684 209.500 L1695 218"/><rect x="1676.500" y="207.500" width="3.500" height="3.500" fill="#fff"/><rect x="1693.500" y="198.500" width="3.800" height="3.800" fill="#fff"/><rect x="1693.500" y="216.500" width="3.800" height="3.800" fill="#fff"/>
<rect x="1758.500" y="210.500" width="7" height="7"/><path d="M1760 214 L1761.800 215.800 L1764.500 212"/>
<path d="M1777.800 213.200 L1782.500 217.900" stroke="#fff" stroke-width="1.100"/><rect x="1685" y="207.300" width="4" height="4" fill="#fff"/></g>
</svg>
<svg class="abs" style="left:3px;top:300px" width="620" height="540" viewBox="1300 417 620 540">
<path d="M1460 637 H1529" stroke="#3b8ec8" stroke-width="1.100"/><path d="M1528.500 633.300 L1536 637 L1528.500 640.700 Z" fill="#3b8ec8"/>
<path d="M1687.500 637.500 H1757" stroke="#a9a9a9" stroke-width="1.500"/>
<path d="M1686.500 507.500 L1761 632" stroke="#8e8e8e" stroke-width="1"/>
<path d="M1686.500 768 L1761 643" stroke="#8e8e8e" stroke-width="1"/>
<path d="M1756 633.500 L1762.500 629.500 L1764.500 629.500 L1764.500 645.500 L1762.500 645.500 L1756 641.500 Z" fill="#7a7a7c"/>
<text x="1498" y="633.300" font-family="Liberation Sans" font-size="10" fill="#4a97cf" text-anchor="middle">Children</text>
<text x="1725.500" y="633.300" font-family="Liberation Sans" font-size="10" fill="#6e6e6e" text-anchor="middle">Children</text>
<text x="0" y="0" font-family="Liberation Sans" font-size="10" fill="#6e6e6e" text-anchor="middle" transform="translate(1729.500 569.500) rotate(59)">Children</text>
<text x="0" y="0" font-family="Liberation Sans" font-size="10" fill="#6e6e6e" text-anchor="middle" transform="translate(1721 701) rotate(-59)">Drawing of</text>
</svg>
<div class="card" style="left:23px;top:470px"><div class="th"></div><svg class="abs" style="left:3px;top:3px" width="121" height="92" viewBox="0 0 121 92"><g filter="url(#tb)" fill="none"><ellipse cx="38" cy="72" rx="20" ry="13" stroke="#c4c4c4" stroke-width="4" transform="rotate(-20 38 72)"/><path d="M20 66 Q24 56 34 56 Q39 57 38 62" stroke="#151515" stroke-width="3"/><ellipse cx="84.300" cy="42" rx="9.300" ry="17.300" stroke="#141414" stroke-width="3" transform="rotate(32 84.300 42)"/><ellipse cx="84.300" cy="42" rx="6" ry="13.500" stroke="#9a9a9a" stroke-width=".5" transform="rotate(32 84.300 42)"/><path d="M76 38 L86 36 L88 42 L84 47 L76 46 Z" fill="#111"/><path d="M76 44 L66 60" stroke="#333" stroke-width="1.200"/><circle cx="51" cy="46.800" r="12" stroke="#c8c8c8" stroke-width=".6"/><path d="M38 27 L42 36 L43.500 46 L44.500 58 M41 30 L37 34 M44 50 L50 47 L58 50" stroke="#161616" stroke-width="1.800"/><path d="M41.700 36.600 L42.800 44" stroke="#1f5fa0" stroke-width="1.800"/><path d="M48 47 L52 42" stroke="#1f5fa0" stroke-width="1.800"/><path d="M55.600 40 Q60 33 68 36 L71 44 L66 49 L57 48 Z" fill="#9b9b9b" stroke="#444" stroke-width=".8"/><path d="M58 38 L66 46 M62 36 L69 43 M57 43 L64 48" stroke="#e8e8e8" stroke-width=".8"/><path d="M46.300 53.200 L60.200 48.600 L69.400 52.300 L60.200 60.500 L48 60.500 Z" fill="#fff" stroke="#222" stroke-width="1"/><path d="M44 58 L40 64 M66 58 L74 52" stroke="#161616" stroke-width="1.500"/></g></svg><div class="abs" style="left:3px;top:64px;width:121px;height:31px;background:rgba(255,255,255,.74)"></div><svg class="abs" style="left:3px;top:66px" width="13" height="13" viewBox="0 0 13 13"><path d="M1.500 4 L6.500 1.500 L11.500 3.500 V9.500 L6.500 12 L1.500 10 Z" fill="#fff" stroke="#444" stroke-width=".9"/><path d="M3.500 4.800 L7 3.300 L10.200 4.600 V8.300 L6.800 9.800 L3.500 8.500 Z" fill="#4aa3d6" stroke="#1c5c86" stroke-width=".6"/><path d="M3.500 4.800 L6.800 6.200 L10.200 4.600 M6.800 6.200 V9.800" stroke="#1c5c86" stroke-width=".6" fill="none"/></svg><div class="t1" style="margin-top:1px">40107001 | A.2</div><div class="t2" style="left:7px;margin-top:1px">| In Work</div><svg class="abs" style="left:102px;top:82px" width="14" height="9" viewBox="0 0 14 9"><path d="M1.500 1.500 L7 6.500 L12.500 1.500" fill="none" stroke="#a4abb3" stroke-width="1.500"/></svg></div>
<div class="card" style="left:250px;top:339px"><div class="th"></div><svg class="abs" style="left:3px;top:3px" width="121" height="61" viewBox="0 0 121 61"><defs><filter id="tb" x="-5%" y="-5%" width="110%" height="110%"><feGaussianBlur stdDeviation=".45"/></filter></defs><g filter="url(#tb)"><path d="M18.600 60.500 L25.400 51.800 L29.500 43 L33 38.500 L41 34.200 L44.300 27 L50 22.500 L57 21 L64.700 19.300 L72 15 L78.200 10.500 L84 8.300 L89 9.500 L96 13 L99.500 18 L99.200 24 L98.500 29 L96.500 33 L88.400 35 L80.500 36 L79.500 39 L76 40 L71.400 39.600 L75 44 L79.600 48.500 L79 52 L74.800 52.800 L70 50 L64.700 47 L58 51 L51 56 L47 60.500 Z" fill="#1c1c1e"/><path d="M47 44 L56 38 L70 39 L66 46 L56 52 L48 59 L44 60 Z" fill="#5b5c60"/><path d="M50 46 L58 41 M54 50 L64 42 M48 54 L56 45" stroke="#d8d8da" stroke-width="1"/><path d="M73.500 30.500 L88 28 L89.500 30.500 L75 33.300 Z" fill="#f1f3f5"/><path d="M64.700 24.800 L70.500 22.500 L71.400 24.600 L66 27 Z M74.500 21.500 L80.500 19.200 L81 21 L75.500 23 Z M75 13.500 L79 12 L79.500 13.500 L76 15 Z" fill="#e4e6e9"/><path d="M59 27 L72 22 L90 20 L97 23 L96 30 L84 27 L70 29 L62 33 Z" fill="#2c2c2f"/><circle cx="85" cy="10.800" r="2.100" fill="#1212c4"/><circle cx="93.800" cy="15.900" r="2.100" fill="#1212c4"/><circle cx="54.800" cy="24" r="2.100" fill="#1212c4"/><circle cx="32.800" cy="41.600" r="2.100" fill="#1212c4"/><circle cx="41.300" cy="46.700" r="2.100" fill="#1212c4"/><rect x="34" y="49" width="2.500" height="5.300" fill="#d97212"/><circle cx="77.500" cy="37.800" r="1.700" fill="none" stroke="#1c1c1e" stroke-width="1"/></g></svg><div class="abs" style="left:3px;top:64px;width:121px;height:31px;background:rgba(255,255,255,.74)"></div><svg class="abs" style="left:3px;top:66px" width="13" height="13" viewBox="0 0 13 13"><path d="M1.500 4 L6.500 1.500 L11.500 3.500 V9.500 L6.500 12 L1.500 10 Z" fill="#fff" stroke="#444" stroke-width=".9"/><path d="M3.500 4.800 L7 3.300 L10.200 4.600 V8.300 L6.800 9.800 L3.500 8.500 Z" fill="#4aa3d6" stroke="#1c5c86" stroke-width=".6"/><path d="M3.500 4.800 L6.800 6.200 L10.200 4.600 M6.800 6.200 V9.800" stroke="#1c5c86" stroke-width=".6" fill="none"/></svg><div class="t1" style="margin-top:0px">40099001 | A.1</div><div class="t2" style="left:7px;margin-top:0px">| In Work</div><svg class="abs" style="left:102px;top:82px" width="14" height="9" viewBox="0 0 14 9"><path d="M1.500 1.500 L7 6.500 L12.500 1.500" fill="none" stroke="#a4abb3" stroke-width="1.500"/></svg></div>
<div class="card" style="left:250px;top:470px"><div class="th"></div><svg class="abs" style="left:3px;top:3px" width="121" height="61" viewBox="0 0 121 61"><defs><filter id="tb" x="-5%" y="-5%" width="110%" height="110%"><feGaussianBlur stdDeviation=".45"/></filter></defs><g filter="url(#tb)"><path d="M18.600 60.500 L25.400 51.800 L29.500 43 L33 38.500 L41 34.200 L44.300 27 L50 22.500 L57 21 L64.700 19.300 L72 15 L78.200 10.500 L84 8.300 L89 9.500 L96 13 L99.500 18 L99.200 24 L98.500 29 L96.500 33 L88.400 35 L80.500 36 L79.500 39 L76 40 L71.400 39.600 L75 44 L79.600 48.500 L79 52 L74.800 52.800 L70 50 L64.700 47 L58 51 L51 56 L47 60.500 Z" fill="#1c1c1e"/><path d="M47 44 L56 38 L70 39 L66 46 L56 52 L48 59 L44 60 Z" fill="#5b5c60"/><path d="M50 46 L58 41 M54 50 L64 42 M48 54 L56 45" stroke="#d8d8da" stroke-width="1"/><path d="M73.500 30.500 L88 28 L89.500 30.500 L75 33.300 Z" fill="#f1f3f5"/><path d="M64.700 24.800 L70.500 22.500 L71.400 24.600 L66 27 Z M74.500 21.500 L80.500 19.200 L81 21 L75.500 23 Z M75 13.500 L79 12 L79.500 13.500 L76 15 Z" fill="#e4e6e9"/><path d="M59 27 L72 22 L90 20 L97 23 L96 30 L84 27 L70 29 L62 33 Z" fill="#2c2c2f"/><circle cx="85" cy="10.800" r="2.100" fill="#1212c4"/><circle cx="93.800" cy="15.900" r="2.100" fill="#1212c4"/><circle cx="54.800" cy="24" r="2.100" fill="#1212c4"/><circle cx="32.800" cy="41.600" r="2.100" fill="#1212c4"/><circle cx="41.300" cy="46.700" r="2.100" fill="#1212c4"/><rect x="34" y="49" width="2.500" height="5.300" fill="#d97212"/><circle cx="77.500" cy="37.800" r="1.700" fill="none" stroke="#1c1c1e" stroke-width="1"/></g></svg><div class="abs" style="left:3px;top:64px;width:121px;height:31px;background:rgba(255,255,255,.74)"></div><svg class="abs" style="left:3px;top:66px" width="13" height="13" viewBox="0 0 13 13"><path d="M1.500 4 L6.500 1.500 L11.500 3.500 V9.500 L6.500 12 L1.500 10 Z" fill="#fff" stroke="#444" stroke-width=".9"/><path d="M3.500 4.800 L7 3.300 L10.200 4.600 V8.300 L6.800 9.800 L3.500 8.500 Z" fill="#4aa3d6" stroke="#1c5c86" stroke-width=".6"/><path d="M3.500 4.800 L6.800 6.200 L10.200 4.600 M6.800 6.200 V9.800" stroke="#1c5c86" stroke-width=".6" fill="none"/></svg><div class="t1" style="margin-top:1px">40099001 | A.2</div><div class="t2" style="left:7px;margin-top:1px">| In Work</div><svg class="abs" style="left:102px;top:82px" width="14" height="9" viewBox="0 0 14 9"><path d="M1.500 1.500 L7 6.500 L12.500 1.500" fill="none" stroke="#a4abb3" stroke-width="1.500"/></svg></div>
<div class="card" style="left:250px;top:601px"><div class="th"></div><svg class="abs" style="left:3px;top:3px" width="121" height="91" viewBox="0 0 121 91"><g fill="none" stroke="#9a9ea4" stroke-width=".7"><rect x="13.500" y="15.500" width="95" height="60" stroke="#c9ccd4" stroke-dasharray="1 5"/><path d="M24 18 h8 v12 l5 2 v6 l-5 -1 l-8 -3 Z M25 21 h6 M25 24 h6 M25 27 h6"/><path d="M46 22 h10 M51 17 v14 M48 26 h6 v5 h-6 Z"/><path d="M63 32 q6 -4 10 0 l10 8 l-1 6 l-6 -1 l-10 -5 Z M70 38 l8 5"/><path d="M86 40 q4 -10 12 -8 l4 2 v10 l-8 2 l-8 -2 Z M90 42 l8 -6"/><path d="M24 44 q6 -8 14 -5 l-2 6 l-12 3 Z M22 46 h16"/><path d="M24 56 v10 M27 56 v10 M30 56 v10 M33 58 l4 6"/><path d="M47 62 q4 -8 8 0 v6 M50 60 v8"/><path d="M66 60 q5 -8 9 0 v7 M69 58 l4 6"/><rect x="78" y="16" width="30" height="3" stroke="#c5c9e6"/></g><path d="M70 55 l4 -1" stroke="#5a6ae0" stroke-width="1.400"/></svg><div class="abs" style="left:3px;top:64px;width:121px;height:31px;background:rgba(255,255,255,.74)"></div><svg class="abs" style="left:3px;top:67px" width="13" height="13" viewBox="0 0 13 13"><rect x=".5" y=".5" width="12" height="12" fill="#f4f4f4" stroke="#333" stroke-width="1"/><rect x="2" y="2" width="5" height="3" fill="#2f80b5"/><rect x="8" y="2" width="3" height="3" fill="#2f80b5"/><path d="M2 10.500 Q4 6.500 6.500 8 L7.500 10.500 Z" fill="#2f80b5"/><rect x="8.500" y="7" width="2.500" height="4" fill="#2f80b5"/></svg><div class="t1" style="margin-top:1px">60214002-R | A.</div><div class="t2" style="left:8px;margin-top:1px">1 | In Work</div><svg class="abs" style="left:102px;top:82px" width="14" height="9" viewBox="0 0 14 9"><path d="M1.500 1.500 L7 6.500 L12.500 1.500" fill="none" stroke="#a4abb3" stroke-width="1.500"/></svg></div>
<div class="card" style="left:477px;top:470px"><div class="th"></div><svg class="abs" style="left:3px;top:3px" width="121" height="92" viewBox="0 0 121 92"><g filter="url(#tb)"><path d="M49 60 L52 73 L56.500 79.600 L63 77.800 L69.400 61 L74 59 L71 54 L66 60 Z" fill="#c9c9c9"/><path d="M68.500 9.300 L72 10 L75 13 L76.400 20.400 L76.200 30 L76 40.700 L77 46 L75 48 L75.500 56 L74 60 L70 61 L71.300 55.500 L69 52 L66 58 L62 61 L49 61 L48 55.500 L44.400 48 L46.300 40.700 L44.400 33.300 L44.400 24 L48 21.300 L57.400 19.400 L61 14.800 L64 11 Z" fill="#1b1b1d"/><path d="M60 22 L68 19 L72 24 L70 36 L64 48 L60 54 L57 48 L58 36 Z" fill="#2e2e31"/><path d="M63 30 L70 27 L69 38 L62 50 Z" fill="#111"/><ellipse cx="50" cy="29" rx="2" ry="3" fill="#303033"/><ellipse cx="50" cy="49" rx="2" ry="3" fill="#303033"/><ellipse cx="54" cy="57.500" rx="3.500" ry="2" fill="#0c0c0c"/></g></svg><div class="abs" style="left:3px;top:64px;width:121px;height:31px;background:rgba(255,255,255,.74)"></div><svg class="abs" style="left:4px;top:66px" width="13" height="13" viewBox="0 0 13 13"><path d="M1 3.500 L4 2 L6.500 3 V6 L11.500 7.500 V11 L8 12.500 L1 10 Z" fill="#3f97cc" stroke="#174a6e" stroke-width=".9"/><path d="M1 3.500 L3.800 4.600 L6.500 3 M3.800 4.600 V7.500 L8 9 L11.500 7.500 M8 9 V12.500" stroke="#174a6e" stroke-width=".7" fill="none"/></svg><div class="t1" style="margin-top:1px">60214002-R | A.</div><div class="t2" style="left:8px;margin-top:1px">1 | In Work</div><svg class="abs" style="left:102px;top:82px" width="14" height="9" viewBox="0 0 14 9"><path d="M1.500 1.500 L7 6.500 L12.500 1.500" fill="none" stroke="#a4abb3" stroke-width="1.500"/></svg></div>
<div class="circ" style="left:151.5px;top:521px"><i></i><b></b></div>
<div class="circ" style="left:250.5px;top:390px"><i></i><b></b></div>
<div class="circ" style="left:379.5px;top:390px"><i></i><b></b></div>
<div class="circ" style="left:250.5px;top:521px"><i></i></div>
<div class="circ" style="left:379.5px;top:521px"><i></i><b></b></div>
<div class="circ" style="left:379.5px;top:651.5px"><i></i></div>
<div class="circ" style="left:477.5px;top:521px"><i></i></div>
<div class="circ" style="left:606.5px;top:521px"><i></i><b></b></div>
<div class="num" style="left:157.5px;top:498.5px">145</div>
<div class="num" style="left:250px;top:367.5px">3</div>
<div class="num" style="left:381.5px;top:367.5px">46</div>
<div class="num" style="left:381.5px;top:498.5px">45</div>
<div class="num" style="left:606.5px;top:498.5px">1</div>
<div class="ddt" style="left:299px;top:439px"></div>
<div class="ddt" style="left:299px;top:570px"></div>
<div class="ddt" style="left:526px;top:570px"></div>

<div class="abs" style="left:6px;top:938px;width:617px;height:1px;background:#dfe3e3"></div>
<div class="abs" style="left:0;top:939px;width:623px;height:2px;background:#f6f6f6"></div>
<div class="abs" style="left:0;top:941px;width:623px;height:2px;background:#7a7a7a"></div>
<div class="abs" style="left:621px;top:25px;width:2px;height:914px;background:#ececec"></div>
</div>
<div id="status">
<div class="abs" style="left:1297px;top:-2px;width:623px;height:1px;background:#fff"></div>
<span style="left:2px;font-size:11.2px;letter-spacing:-0.45px">SOLIDWORKS</span>
<span style="left:1635px;letter-spacing:-0.100px">Editing Part</span>
<span style="left:1811px;letter-spacing:-0.100px">Custom</span>
<div class="abs" style="left:1868px;top:7.5px;width:0;height:0;border-left:3px solid transparent;border-right:3px solid transparent;border-bottom:3.500px solid #222"></div>
<svg class="abs" style="left:1899px;top:0px" width="20" height="18" viewBox="0 0 20 18"><path d="M3 5 L10 2.500 L17.500 9 V12 L11 15.500 L3 8.500 Z" fill="#f5f5f5" stroke="#333" stroke-width="1"/><path d="M3 5 L11 12 L17.500 9 M11 12 V15.500" fill="none" stroke="#333" stroke-width=".9"/><ellipse cx="10" cy="7" rx="2.800" ry="1.800" fill="none" stroke="#333" stroke-width=".9" transform="rotate(25 10 7)"/></svg>
</div>
</body></html>
